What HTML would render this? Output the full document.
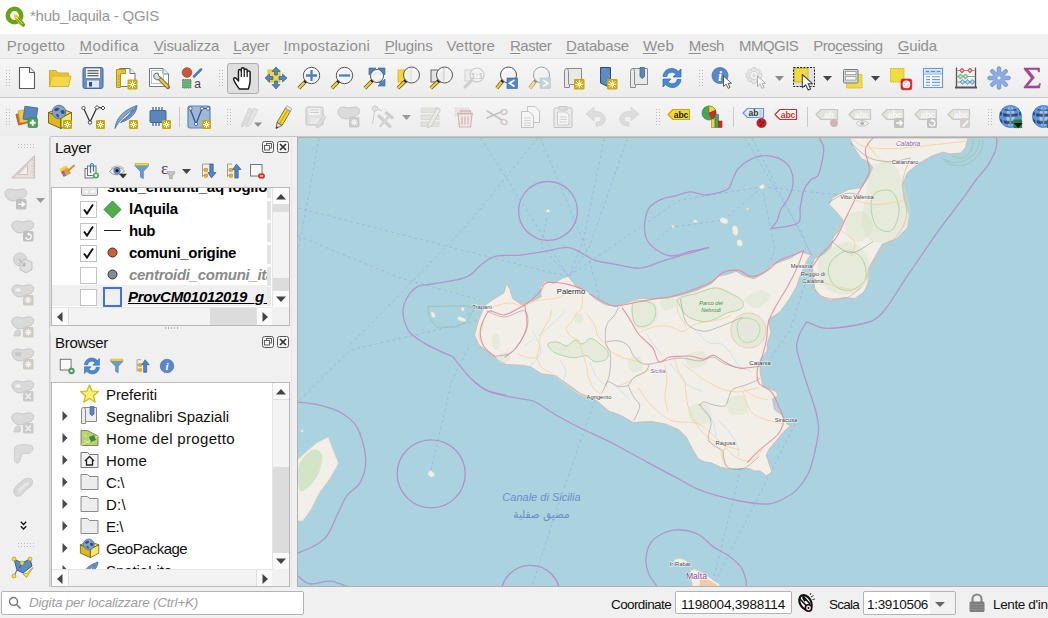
<!DOCTYPE html>
<html lang="it">
<head>
<meta charset="utf-8">
<title>*hub_laquila - QGIS</title>
<style>
html,body{margin:0;padding:0;}
body{width:1048px;height:618px;overflow:hidden;background:#f0f0f0;font-family:"Liberation Sans","DejaVu Sans",sans-serif;font-size:14px;color:#000;position:relative;}
.abs{position:absolute;}
#title{left:0;top:0;width:1048px;height:34px;background:#fff;}
#title .t{position:absolute;left:30px;top:7px;font-size:15px;color:#979797;white-space:nowrap;letter-spacing:0.1px;}
#menubar{left:0;top:34px;width:1048px;height:24px;background:#f0f0f0;border-bottom:1px solid #e2e2e2;}
#menubar span{position:absolute;top:3px;font-size:15px;color:#909090;white-space:nowrap;}
#menubar u{text-decoration-thickness:1px;text-underline-offset:2px;}
#tb1{left:0;top:59px;width:1048px;height:38px;background:linear-gradient(#f6f6f6,#ececec);border-bottom:1px solid #c6c6c6;}
#tb2{left:0;top:98px;width:1048px;height:38px;background:linear-gradient(#fafafa 0,#f5f5f5 2px,#ececec);}
.ic{position:absolute;width:24px;height:24px;overflow:visible;}
.grip{position:absolute;width:6px;height:18px;background-image:radial-gradient(circle,#b8b8b8 0.7px,transparent 0.9px);background-size:3px 3px;}
.vsep{position:absolute;width:1px;background:#c8c8c8;}
#lefttb{left:0;top:137px;width:49px;height:450px;background:#f0f0f0;border-right:1px solid #cfcfcf;}
.panel{position:absolute;background:#f0f0f0;}
.tree{position:absolute;background:#fff;border:1px solid #b9b9b9;overflow:hidden;}
.ptitle{position:absolute;font-size:15px;color:#111;white-space:nowrap;}
.row{position:absolute;left:0;height:22px;white-space:nowrap;}
.lt{position:absolute;font-size:15px;font-weight:bold;white-space:nowrap;color:#000;}
.bt{position:absolute;font-size:15px;white-space:nowrap;color:#111;}
.cb{position:absolute;width:15px;height:15px;border:1px solid #c4c4c4;background:#fff;}
#status{left:0;top:587px;width:1048px;height:31px;background:#f0f0f0;}
.sbx{position:absolute;background:#fff;border:1px solid #b4b4b4;border-radius:2px;box-sizing:border-box;}
</style>
</head>
<body>

<div id="title" class="abs">
<svg class="abs" style="left:5px;top:6px" width="20" height="21" viewBox="0 0 20 21"><circle cx="9.500" cy="9.500" r="6.700" fill="none" stroke="#6aa319" stroke-width="4.600"/><path d="M9 9L12.500 9.500L19 16.500L19 19.500L15.500 19.500L9.500 12.500Z" fill="#ecc72c"/><path d="M12.500 12.500L19.500 20" stroke="#6aa319" stroke-width="3.600"/><path d="M8.500 8L13 9.500L10 12.500Z" fill="#ecc72c"/><path d="M11.500 11.500L17.500 18" stroke="#f4e27a" stroke-width="1"/></svg>
<span class="t" style="letter-spacing:-0.23px">*hub_laquila - QGIS</span>
</div>
<div id="menubar" class="abs">
<span style="left:6.8px;letter-spacing:0.19px">P<u>r</u>ogetto</span>
<span style="left:79.5px;letter-spacing:0.47px"><u>M</u>odifica</span>
<span style="left:153.8px;letter-spacing:-0.18px"><u>V</u>isualizza</span>
<span style="left:233.3px;letter-spacing:-0.27px"><u>L</u>ayer</span>
<span style="left:283.5px;letter-spacing:0.19px"><u>I</u>mpostazioni</span>
<span style="left:384.7px;letter-spacing:-0.20px"><u>P</u>lugins</span>
<span style="left:446.5px;letter-spacing:0.14px">Vett<u>o</u>re</span>
<span style="left:510px;letter-spacing:-0.51px"><u>R</u>aster</span>
<span style="left:566.1px;letter-spacing:-0.18px"><u>D</u>atabase</span>
<span style="left:642.9px;letter-spacing:0.17px"><u>W</u>eb</span>
<span style="left:688.7px;letter-spacing:-0.32px"><u>M</u>esh</span>
<span style="left:739.1px;letter-spacing:-0.57px">MMQGIS</span>
<span style="left:813.3px;letter-spacing:-0.48px">Pro<u>c</u>essing</span>
<span style="left:897.8px;letter-spacing:-0.21px"><u>G</u>uida</span>
</div>
<div id="tb1" class="abs"></div><div id="tb2" class="abs"></div>
<div class="grip" style="left:5px;top:69px"></div>
<svg class="ic" style="left:15px;top:66px;width:24px;height:24px" viewBox="0 0 24 24"><path d="M4.5 1.5H14.5L19.5 6.5V22.5H4.5Z" fill="#fff" stroke="#5a5a5a" stroke-width="1.1" stroke-linejoin="round"/><path d="M14.5 1.5V6.5H19.5" fill="#eee" stroke="#5a5a5a" stroke-width="1.1" stroke-linejoin="round"/></svg>
<svg class="ic" style="left:48px;top:66px;width:24px;height:24px" viewBox="0 0 24 24"><path d="M1.5 4.5H8L10 7H20.5V20.5H1.5Z" fill="#e8c534" stroke="#d2ae1c" stroke-width="1"/><path d="M4 10H23L20.5 20.5H1.5Z" fill="#f3d84a" stroke="#d9b621" stroke-width="1" stroke-linejoin="round"/></svg>
<svg class="ic" style="left:81px;top:66px;width:24px;height:24px" viewBox="0 0 24 24"><rect x="2" y="1.5" width="20" height="21" rx="2" fill="#6790c4" stroke="#44699a" stroke-width="1"/><rect x="5" y="2.500" width="14" height="9.500" fill="#f6f6f6"/><path d="M6.500 4.700H17.500M6.500 7.200H17.500M6.500 9.700H17.500" stroke="#3a3a3a" stroke-width="1.100"/><rect x="6" y="14.500" width="12" height="7" fill="#e3e6ea"/><rect x="8" y="16" width="3" height="4.500" fill="#33507c"/></svg>
<svg class="ic" style="left:114px;top:66px;width:24px;height:24px" viewBox="0 0 24 24"><path d="M5.5 2.5H16L21 7.5V20.5H5.5Z" fill="#fff" stroke="#777" stroke-width="1"/><path d="M16 2.5V7.5H21" fill="#eee" stroke="#777" stroke-width="1"/><path d="M2.5 3.500H11.5V7.5H6.5V21.5H2.5Z" fill="#e9c83a" stroke="#b89512" stroke-width="1"/><path d="M4 10H5.5M4 13H5.5M4 16H5.5M4 19H5.500M8 5V6" stroke="#9a7c10" stroke-width="0.8"/><rect x="13.5" y="13.5" width="10" height="10" rx="1.3" fill="#c9a80a"/><g stroke="#fff" stroke-width="0.95" stroke-linecap="round"><path d="M18.5 15.0V22.0M15.0 18.5H22.0M15.8 15.8L21.2 21.2M21.2 15.8L15.8 21.2"/></g><circle cx="18.5" cy="18.5" r="1.5" fill="#fff"/><circle cx="18.5" cy="18.5" r="0.6" fill="#c9a80a"/></svg>
<svg class="ic" style="left:147px;top:66px;width:24px;height:24px" viewBox="0 0 24 24"><path d="M2.5 2.5H16L21.5 8V20.5H2.5Z" fill="#fff" stroke="#777" stroke-width="1"/><path d="M16 2.5V8H21.5" fill="#eee" stroke="#777" stroke-width="1"/><rect x="4.5" y="4.5" width="12" height="13" fill="none" stroke="#a9c4dc" stroke-width="1"/><path d="M12 12L21 21" stroke="#8a6d1c" stroke-width="4.2" stroke-linecap="round"/><path d="M12.500 12.5L20.5 20.5" stroke="#e7c45a" stroke-width="2.4" stroke-linecap="round"/><path d="M8 7.500A3.600 3.600 0 1 0 13.500 12L11.500 9.500L11 7Z" fill="#ddd" stroke="#666" stroke-width="1"/></svg>
<svg class="ic" style="left:180px;top:66px;width:24px;height:24px" viewBox="0 0 24 24"><circle cx="7" cy="6.500" r="4.800" fill="#c8573a" stroke="#a8452c" stroke-width="0.8"/><path d="M14 10.500L21 3.500" stroke="#4f7fb5" stroke-width="2.600" stroke-linecap="round"/><rect x="2.500" y="13.500" width="8.500" height="8.500" fill="#6fae7a" stroke="#4a8f58" stroke-width="0.9" stroke-dasharray="1.500 0.800"/><text x="17.500" y="22" font-family="Liberation Sans,sans-serif" font-size="12" text-anchor="middle" fill="#444">a</text></svg>
<div class="grip" style="left:218px;top:69px"></div>
<div class="abs" style="left:227px;top:63px;width:30px;height:29px;background:#dfdfdf;border:1px solid #adadad;border-radius:3px"></div>
<svg class="ic" style="left:231px;top:66px;width:24px;height:24px" viewBox="0 0 24 24"><g transform="translate(12 12) scale(1.130) translate(-11.500 -11.800)"><path d="M8.200 21.500C6 18 3.500 15 3.200 12.800C3.100 11.500 4.600 11.200 5.600 12.300L7.500 14.500V5.500C7.500 3.800 10 3.800 10 5.500V4C10 2.300 12.600 2.300 12.600 4V5C12.600 3.500 15.200 3.500 15.200 5V6.500C15.200 5.200 17.800 5.200 17.800 6.800V14C17.800 17 17 19 16.200 21.500Z" fill="#fff" stroke="#1c1c1c" stroke-width="1.300" stroke-linejoin="round"/><path d="M10 5.500V11M12.600 5V11M15.200 6.500V11" stroke="#1c1c1c" stroke-width="1.100"/></g></svg>
<svg class="ic" style="left:264px;top:66px;width:24px;height:24px" viewBox="0 0 24 24"><rect x="4" y="4" width="12" height="12" fill="#f0d83c" stroke="#d0b418" stroke-width="0.8"/><g fill="#4f86c6" stroke="#2f5f98" stroke-width="0.700" stroke-linejoin="round"><path d="M12 1L16 5.500H13.500V9H10.500V5.500H8Z"/><path d="M12 23L16 18.500H13.500V15H10.500V18.500H8Z"/><path d="M1 12L5.500 8V10.500H9V13.500H5.500V16Z"/><path d="M23 12L18.500 8V10.500H15V13.500H18.500V16Z"/></g></svg>
<svg class="ic" style="left:297px;top:66px;width:24px;height:24px" viewBox="0 0 24 24"><g opacity="1"><path d="M8.432 15.568L1.8 22.2" stroke="#5a4a10" stroke-width="3.6" stroke-linecap="butt"/><path d="M7.832000000000001 16.168L1.8 22.2" stroke="#f2cf30" stroke-width="2.3" stroke-linecap="butt"/><circle cx="8.632" cy="15.368" r="1.7" fill="#111"/><circle cx="14.5" cy="9.5" r="8.2" fill="#f3f3f1" fill-opacity="0.9" stroke="#555" stroke-width="1"/><path d="M8.760000000000002 7.040000000000001A6.56 6.56 0 0 1 18.6 4.580000000000001" fill="none" stroke="#fff" stroke-width="1.5" opacity="0.8"/></g><path d="M14.500 4V15M9 9.500H20" stroke="#4a80c0" stroke-width="2.300"/></svg>
<svg class="ic" style="left:330px;top:66px;width:24px;height:24px" viewBox="0 0 24 24"><g opacity="1"><path d="M8.432 15.568L1.8 22.2" stroke="#5a4a10" stroke-width="3.6" stroke-linecap="butt"/><path d="M7.832000000000001 16.168L1.8 22.2" stroke="#f2cf30" stroke-width="2.3" stroke-linecap="butt"/><circle cx="8.632" cy="15.368" r="1.7" fill="#111"/><circle cx="14.5" cy="9.5" r="8.2" fill="#f3f3f1" fill-opacity="0.9" stroke="#555" stroke-width="1"/><path d="M8.760000000000002 7.040000000000001A6.56 6.56 0 0 1 18.6 4.580000000000001" fill="none" stroke="#fff" stroke-width="1.5" opacity="0.8"/></g><path d="M9 9.500H20" stroke="#4a80c0" stroke-width="2.300"/></svg>
<svg class="ic" style="left:363px;top:66px;width:24px;height:24px" viewBox="0 0 24 24"><g fill="#4f86c6" stroke="#2f5f98" stroke-width="0.600" stroke-linejoin="round"><path d="M6 2H13L10.800 4.200L13.500 7L11 9.500L8.200 6.800L6 9Z"/><path d="M22 2H15L17.200 4.200L14.500 7L17 9.500L19.800 6.800L22 9Z"/><path d="M22 18H15L17.200 15.800L14.500 13L17 10.500L19.800 13.200L22 11Z" transform="translate(0 2)"/></g><g opacity="1"><path d="M9.190000000000001 14.809999999999999L1.8 22.2" stroke="#5a4a10" stroke-width="3.6" stroke-linecap="butt"/><path d="M8.590000000000002 15.409999999999998L1.8 22.2" stroke="#f2cf30" stroke-width="2.3" stroke-linecap="butt"/><circle cx="9.39" cy="14.61" r="1.7" fill="#111"/><circle cx="14" cy="10" r="6.5" fill="#f3f3f1" fill-opacity="0.9" stroke="#555" stroke-width="1"/><path d="M9.45 8.05A5.2 5.2 0 0 1 17.25 6.1" fill="none" stroke="#fff" stroke-width="1.5" opacity="0.8"/></g><path d="M16.500 8.500L20 10.500L16.500 12.500Z" fill="#fff" opacity="0.700"/></svg>
<svg class="ic" style="left:396px;top:66px;width:24px;height:24px" viewBox="0 0 24 24"><rect x="2" y="4" width="11" height="12" fill="#f0d83c" stroke="#d0b418" stroke-width="0.800"/><g opacity="1"><path d="M9.58 14.92L1.8 22.2" stroke="#5a4a10" stroke-width="3.6" stroke-linecap="butt"/><path d="M8.98 15.52L1.8 22.2" stroke="#f2cf30" stroke-width="2.3" stroke-linecap="butt"/><circle cx="9.78" cy="14.72" r="1.7" fill="#111"/><circle cx="15.5" cy="9" r="8" fill="#f3f3f1" fill-opacity="0.9" stroke="#555" stroke-width="1"/><path d="M9.9 6.6A6.4 6.4 0 0 1 19.5 4.2" fill="none" stroke="#fff" stroke-width="1.5" opacity="0.8"/></g><path d="M15 2V15" stroke="#ccc" stroke-width="0.800"/></svg>
<svg class="ic" style="left:429px;top:66px;width:24px;height:24px" viewBox="0 0 24 24"><rect x="2" y="4" width="11" height="12" fill="#e4e4e4" stroke="#666" stroke-width="1"/><g opacity="1"><path d="M9.58 14.92L1.8 22.2" stroke="#5a4a10" stroke-width="3.6" stroke-linecap="butt"/><path d="M8.98 15.52L1.8 22.2" stroke="#f2cf30" stroke-width="2.3" stroke-linecap="butt"/><circle cx="9.78" cy="14.72" r="1.7" fill="#111"/><circle cx="15.5" cy="9" r="8" fill="#f3f3f1" fill-opacity="0.9" stroke="#555" stroke-width="1"/><path d="M9.9 6.6A6.4 6.4 0 0 1 19.5 4.2" fill="none" stroke="#fff" stroke-width="1.5" opacity="0.8"/></g><path d="M15 2V15" stroke="#bbb" stroke-width="0.800"/></svg>
<svg class="ic" style="left:462px;top:66px;width:24px;height:24px" viewBox="0 0 24 24"><g opacity="0.450"><rect x="3" y="4" width="10" height="11" fill="#e6e6e6" stroke="#999" stroke-width="0.800"/><path d="M9 15L3 21" stroke="#aaa" stroke-width="3" stroke-linecap="round"/><circle cx="15" cy="9" r="7" fill="#f6f6f6" stroke="#999" stroke-width="1.200"/><text x="15" y="12.500" font-family="Liberation Sans,sans-serif" font-weight="bold" font-size="8.500" text-anchor="middle" fill="#999">1:1</text></g></svg>
<svg class="ic" style="left:495px;top:66px;width:24px;height:24px" viewBox="0 0 24 24"><g opacity="1"><path d="M7.58 14.92L1.8 22.2" stroke="#5a4a10" stroke-width="3.6" stroke-linecap="butt"/><path d="M6.98 15.52L1.8 22.2" stroke="#f2cf30" stroke-width="2.3" stroke-linecap="butt"/><circle cx="7.78" cy="14.72" r="1.7" fill="#111"/><circle cx="13.5" cy="9" r="8" fill="#f3f3f1" fill-opacity="0.9" stroke="#555" stroke-width="1"/><path d="M7.9 6.6A6.4 6.4 0 0 1 17.5 4.2" fill="none" stroke="#fff" stroke-width="1.5" opacity="0.8"/></g><rect x="12" y="12" width="10.500" height="10.500" fill="#4f86c6" stroke="#2f5f98" stroke-width="0.600"/><path d="M19.500 14L14.500 17.200L19.500 20.500" fill="none" stroke="#fff" stroke-width="1.800"/></svg>
<svg class="ic" style="left:528px;top:66px;width:24px;height:24px" viewBox="0 0 24 24"><g opacity="0.520"><g opacity="1"><path d="M7.58 14.92L1.8 22.2" stroke="#5a4a10" stroke-width="3.6" stroke-linecap="butt"/><path d="M6.98 15.52L1.8 22.2" stroke="#f2cf30" stroke-width="2.3" stroke-linecap="butt"/><circle cx="7.78" cy="14.72" r="1.7" fill="#111"/><circle cx="13.5" cy="9" r="8" fill="#f3f3f1" fill-opacity="0.9" stroke="#555" stroke-width="1"/><path d="M7.9 6.6A6.4 6.4 0 0 1 17.5 4.2" fill="none" stroke="#fff" stroke-width="1.5" opacity="0.8"/></g><rect x="12" y="12" width="10.500" height="10.500" fill="#9fb4cc" stroke="#8aa" stroke-width="0.600"/><path d="M15 14L20 17.200L15 20.500" fill="none" stroke="#fff" stroke-width="1.800"/></g></svg>
<svg class="ic" style="left:561px;top:66px;width:24px;height:24px" viewBox="0 0 24 24"><path d="M5.500 2.500H20.500V18.500H8.500V21.500H3.500V5.500Q3.500 2.500 5.500 2.500Z" fill="#e9e9e9" stroke="#8a8a8a" stroke-width="1"/><path d="M5.500 2.500Q7.500 2.500 7.500 5.500V18.500" fill="none" stroke="#8a8a8a" stroke-width="1"/><rect x="13" y="13" width="10.5" height="10.5" rx="1.3" fill="#c9a80a"/><g stroke="#fff" stroke-width="0.95" stroke-linecap="round"><path d="M18.25 14.5V22.0M14.5 18.25H22.0M15.3 15.3L21.2 21.2M21.2 15.3L15.3 21.2"/></g><circle cx="18.25" cy="18.25" r="1.5" fill="#fff"/><circle cx="18.25" cy="18.25" r="0.6" fill="#c9a80a"/></svg>
<svg class="ic" style="left:594px;top:66px;width:24px;height:24px" viewBox="0 0 24 24"><path d="M6.500 1.500H16.500V22L6.500 17Z" fill="#5b86ba" stroke="#2f4f7a" stroke-width="1" stroke-linejoin="round"/><path d="M8 3L15 16M10 2L16 12M7 8L12 18" stroke="#7ea3cf" stroke-width="0.600"/><rect x="13" y="13" width="10.5" height="10.5" rx="1.3" fill="#c9a80a"/><g stroke="#fff" stroke-width="0.95" stroke-linecap="round"><path d="M18.25 14.5V22.0M14.5 18.25H22.0M15.3 15.3L21.2 21.2M21.2 15.3L15.3 21.2"/></g><circle cx="18.25" cy="18.25" r="1.5" fill="#fff"/><circle cx="18.25" cy="18.25" r="0.6" fill="#c9a80a"/></svg>
<svg class="ic" style="left:627px;top:66px;width:24px;height:24px" viewBox="0 0 24 24"><path d="M5.500 2.500H20.500V18.500H8.500V21.500H3.500V5.500Q3.500 2.500 5.500 2.500Z" fill="#e9e9e9" stroke="#8a8a8a" stroke-width="1"/><path d="M5.500 2.500Q7.500 2.500 7.500 5.500V18.500" fill="none" stroke="#8a8a8a" stroke-width="1"/><path d="M13 1.500H17.500V10.500L15.200 12.500L13 10.500Z" fill="#5b86ba" stroke="#3f689a" stroke-width="0.800"/></svg>
<svg class="ic" style="left:660px;top:66px;width:24px;height:24px" viewBox="0 0 24 24"><g fill="#4a8ad0" stroke="#2d66aa" stroke-width="0.700" stroke-linejoin="round"><path d="M3 10.500C3.500 5 8 2 12.500 2.500C15 2.800 17 4 18.300 5.500L21 3V11H13L15.800 8.200C14.500 6.800 13 6.200 11.800 6.200C9 6.200 7.200 8 6.800 10.500Z"/><path d="M21 13.500C20.500 19 16 22 11.500 21.500C9 21.200 7 20 5.700 18.500L3 21V13H11L8.200 15.800C9.500 17.200 11 17.800 12.200 17.800C15 17.800 16.800 16 17.200 13.500Z"/></g></svg>
<div class="grip" style="left:698px;top:69px"></div>
<svg class="ic" style="left:710px;top:66px;width:24px;height:24px" viewBox="0 0 24 24"><circle cx="10" cy="9.500" r="8" fill="#5b86c8" stroke="#4672b0" stroke-width="0.800"/><text x="10" y="14.500" font-family="Liberation Serif,serif" font-style="italic" font-weight="bold" font-size="14" text-anchor="middle" fill="#fff">i</text><path transform="translate(13.5 10) scale(0.95)" d="M0 0L0 11L2.8 8.6L4.9 13L6.9 12L4.9 7.8L8.4 7.6Z" fill="#fff" stroke="#444" stroke-width="0.9" stroke-linejoin="round"/></svg>
<svg class="ic" style="left:744px;top:66px;width:24px;height:24px" viewBox="0 0 24 24"><g opacity="0.450"><path d="M10 1.500L12 2L12.600 4.200L14.800 3.300L16.300 4.800L15.400 7L17.600 7.600L18 9.500L17.600 11.400L15.400 12L16.300 14.200L14.800 15.700L12.600 14.800L12 17L10 17.500L8 17L7.400 14.800L5.200 15.700L3.700 14.200L4.600 12L2.400 11.400L2 9.500L2.400 7.600L4.600 7L3.700 4.800L5.200 3.300L7.400 4.200L8 2Z" fill="#dcdcdc" stroke="#999" stroke-width="0.900"/><circle cx="10" cy="9.500" r="4.200" fill="#f2f2f2" stroke="#999" stroke-width="0.900"/><path d="M8.600 7.200L12.500 9.500L8.600 11.800Z" fill="#bbb"/><path transform="translate(13.5 10) scale(0.95)" d="M0 0L0 11L2.8 8.6L4.9 13L6.9 12L4.9 7.8L8.4 7.6Z" fill="#fff" stroke="#444" stroke-width="0.9" stroke-linejoin="round"/></g></svg>
<svg class="ic" style="left:792px;top:66px;width:24px;height:24px" viewBox="0 0 24 24"><rect x="1.500" y="1.500" width="21" height="19" fill="#dfe3e3" stroke="#222" stroke-width="1" stroke-dasharray="2 1.300"/><rect x="2.500" y="2.500" width="13.500" height="13.500" fill="#f0dc40" stroke="#c9ad14" stroke-width="0.800"/><path transform="translate(10.3 8.5) scale(1.2)" d="M0 0L0 11L2.8 8.6L4.9 13L6.9 12L4.9 7.8L8.4 7.6Z" fill="#fff" stroke="#444" stroke-width="0.9" stroke-linejoin="round"/></svg>
<svg class="ic" style="left:840px;top:66px;width:24px;height:24px" viewBox="0 0 24 24"><rect x="6.500" y="8.500" width="15.500" height="13.500" fill="#f0dc40" stroke="#c9ad14" stroke-width="0.900" stroke-dasharray="1.500 0.800"/><rect x="3.500" y="3.500" width="14.500" height="13.500" rx="1" fill="#d4dcdf" stroke="#7a7a7a" stroke-width="1"/><rect x="5.500" y="5.500" width="10.500" height="3.200" fill="#fff" stroke="#888" stroke-width="0.700"/><rect x="5.500" y="10.800" width="10.500" height="3.200" fill="#fff" stroke="#888" stroke-width="0.700"/></svg>
<svg class="ic" style="left:888px;top:66px;width:24px;height:24px" viewBox="0 0 24 24"><rect x="2.500" y="2.500" width="13.500" height="13.500" fill="#f0dc40" stroke="#c9ad14" stroke-width="0.900" stroke-dasharray="1.500 0.800"/><rect x="13" y="13" width="10.800" height="10.800" rx="2" fill="#dc2a2a" stroke="#b51818" stroke-width="0.600"/><circle cx="18.400" cy="18.400" r="3.200" fill="#f4d0d0" stroke="#fff" stroke-width="1.300"/><path d="M16.200 20.600L20.600 16.200" stroke="#fff" stroke-width="1.400"/></svg>
<svg class="ic" style="left:921px;top:66px;width:24px;height:24px" viewBox="0 0 24 24"><rect x="2.500" y="2.500" width="19" height="19" fill="#fbfdff" stroke="#6a9ad4" stroke-width="1.100"/><rect x="3.500" y="3.500" width="17" height="4" fill="#c4daf0"/><path d="M5 5.500H8M10 5.500H14M16 5.500H19" stroke="#5a8ac8" stroke-width="1.100"/><path d="M3 8H21" stroke="#6a9ad4" stroke-width="0.800"/><path d="M5 10.800H9M11 10.800H19M5 13.600H9M11 13.600H19M5 16.400H9M11 16.400H19M5 19.200H9M11 19.200H19" stroke="#6a9ad4" stroke-width="1.100"/></svg>
<svg class="ic" style="left:954px;top:66px;width:24px;height:24px" viewBox="0 0 24 24"><path d="M2.500 1.500V21M21.500 1.500V21" stroke="#555" stroke-width="1.300"/><path d="M1 21.500H23" stroke="#555" stroke-width="2"/><path d="M2.500 4.500H21.500M2.500 10.500H21.500M2.500 16H21.500" stroke="#888" stroke-width="0.800"/><path d="M5.4 4.5L8 1.9L10.6 4.5L8 7.1Z" fill="#ec6a78" stroke="#c8404e" stroke-width="0.700"/><circle cx="8" cy="4.5" r="0.800" fill="#fff" opacity="0.800"/><path d="M13.4 4.5L16 1.9L18.6 4.5L16 7.1Z" fill="#ec6a78" stroke="#c8404e" stroke-width="0.700"/><circle cx="16" cy="4.5" r="0.800" fill="#fff" opacity="0.800"/><path d="M3.9 10.5L6.5 7.9L9.1 10.5L6.5 13.1Z" fill="#8ad09a" stroke="#4aa55a" stroke-width="0.700"/><circle cx="6.5" cy="10.5" r="0.800" fill="#fff" opacity="0.800"/><path d="M8.9 10.5L11.5 7.9L14.1 10.5L11.5 13.1Z" fill="#8ad09a" stroke="#4aa55a" stroke-width="0.700"/><circle cx="11.5" cy="10.5" r="0.800" fill="#fff" opacity="0.800"/><path d="M5.9 16L8.5 13.4L11.1 16L8.5 18.6Z" fill="#86bce0" stroke="#4f86c6" stroke-width="0.700"/><circle cx="8.5" cy="16" r="0.800" fill="#fff" opacity="0.800"/><path d="M10.9 16L13.5 13.4L16.1 16L13.5 18.6Z" fill="#86bce0" stroke="#4f86c6" stroke-width="0.700"/><circle cx="13.5" cy="16" r="0.800" fill="#fff" opacity="0.800"/><path d="M15.6 16L18.2 13.4L20.8 16L18.2 18.6Z" fill="#86bce0" stroke="#4f86c6" stroke-width="0.700"/><circle cx="18.2" cy="16" r="0.800" fill="#fff" opacity="0.800"/></svg>
<svg class="ic" style="left:987px;top:66px;width:24px;height:24px" viewBox="0 0 24 24"><g transform="translate(12 12)" fill="#8cabe2" stroke="#5a84cc" stroke-width="0.700"><g id="tth"><rect x="-1.800" y="-11.300" width="3.600" height="8" rx="1.700"/></g><rect x="-1.800" y="-11.300" width="3.600" height="8" rx="1.700" transform="rotate(45)"/><rect x="-1.800" y="-11.300" width="3.600" height="8" rx="1.700" transform="rotate(90)"/><rect x="-1.800" y="-11.300" width="3.600" height="8" rx="1.700" transform="rotate(135)"/><rect x="-1.800" y="-11.300" width="3.600" height="8" rx="1.700" transform="rotate(180)"/><rect x="-1.800" y="-11.300" width="3.600" height="8" rx="1.700" transform="rotate(225)"/><rect x="-1.800" y="-11.300" width="3.600" height="8" rx="1.700" transform="rotate(270)"/><rect x="-1.800" y="-11.300" width="3.600" height="8" rx="1.700" transform="rotate(315)"/><circle r="6.300" stroke="none"/><circle r="2" fill="#f4f4f4" stroke="#5a84cc" stroke-width="0.500"/></g></svg>
<svg class="ic" style="left:1020px;top:66px;width:24px;height:24px" viewBox="0 0 24 24"><path d="M4 2H19.500V6H18.500C18.200 4.300 17.600 3.600 16 3.600H8L14.500 11.500L7.500 20H16.500C18.300 20 18.900 19.200 19.500 17.500H20.500L19.500 22H4V21L11.200 12L4 3Z" fill="#a8489e" stroke="#8a3484" stroke-width="0.500"/></svg>
<svg class="abs" style="left:774.5px;top:75.5px" width="9" height="5" viewBox="0 0 9 5"><path d="M0 0H9L4.5 5Z" fill="#8a8a8a"/></svg>
<svg class="abs" style="left:823px;top:75.5px" width="9" height="5" viewBox="0 0 9 5"><path d="M0 0H9L4.5 5Z" fill="#444"/></svg>
<svg class="abs" style="left:871px;top:75.5px" width="9" height="5" viewBox="0 0 9 5"><path d="M0 0H9L4.5 5Z" fill="#444"/></svg>
<div class="grip" style="left:5px;top:108px"></div>
<svg class="ic" style="left:15px;top:105px;width:24px;height:24px" viewBox="0 0 24 24"><rect x="2" y="8" width="11" height="11" transform="rotate(-15 7 13)" fill="#d4623f" stroke="#b04a2c" stroke-width="0.700"/><rect x="4" y="5" width="12" height="12" transform="rotate(-8 10 11)" fill="#eccb45" stroke="#c7a521" stroke-width="0.700"/><rect x="9" y="2" width="13" height="13" transform="rotate(8 15 8)" fill="#5b86ba" stroke="#3f689a" stroke-width="0.800"/><rect x="13" y="13" width="9.500" height="9.500" rx="1.300" fill="#4aa55a" stroke="#2f7a3e" stroke-width="0.600"/><path d="M17.750 14.800V20.700M14.800 17.750H20.700" stroke="#fff" stroke-width="2"/></svg>
<svg class="ic" style="left:48px;top:105px;width:24px;height:24px" viewBox="0 0 24 24"><path d="M0.500 7.500L11 3L23.500 7.500L13 13Z" fill="#f3dc5a" stroke="#5a4a08" stroke-width="0.800" stroke-linejoin="round"/><path d="M0.500 7.500V18L13 23.500V13Z" fill="#dfb81c" stroke="#5a4a08" stroke-width="0.800" stroke-linejoin="round"/><path d="M23.500 7.500V18L13 23.500V13Z" fill="#f5e870" stroke="#5a4a08" stroke-width="0.800" stroke-linejoin="round"/><circle cx="11" cy="7" r="6.800" fill="#7f9fd0" stroke="#4a6a9a" stroke-width="0.800"/><path d="M6 5C7.500 2.500 10 2 11.500 3.500C10.500 6 8 7.500 6 5ZM12.500 5.500C15 4 17.500 5.500 16.500 8.500C14.500 10 12.500 8.500 12.500 5.500ZM8 9C10 8.500 11.500 10 11 12.500C9.500 12.500 8 11 8 9Z" fill="#34507a"/><rect x="15" y="15" width="9" height="9" rx="1.3" fill="#c9a80a"/><g stroke="#fff" stroke-width="0.95" stroke-linecap="round"><path d="M19.5 16.5V22.5M16.5 19.5H22.5M17.3 17.3L21.7 21.7M21.7 17.3L17.3 21.7"/></g><circle cx="19.5" cy="19.5" r="1.5" fill="#fff"/><circle cx="19.5" cy="19.5" r="0.6" fill="#c9a80a"/></svg>
<svg class="ic" style="left:81px;top:105px;width:24px;height:24px" viewBox="0 0 24 24"><path d="M2.500 3L9 17L16 2.500L22 3" fill="none" stroke="#333" stroke-width="1.200"/><g fill="#fff" stroke="#333" stroke-width="0.900"><path d="M2.500 1L4.500 3L2.500 5L0.500 3Z"/><circle cx="9" cy="17.500" r="1.700"/><path d="M16 0.500L18 2.500L16 4.500L14 2.500Z"/><path d="M22 1L24 3L22 5L20 3Z"/></g><rect x="15" y="15" width="9" height="9" rx="1.3" fill="#c9a80a"/><g stroke="#fff" stroke-width="0.95" stroke-linecap="round"><path d="M19.5 16.5V22.5M16.5 19.5H22.5M17.3 17.3L21.7 21.7M21.7 17.3L17.3 21.7"/></g><circle cx="19.5" cy="19.5" r="1.5" fill="#fff"/><circle cx="19.5" cy="19.5" r="0.6" fill="#c9a80a"/></svg>
<svg class="ic" style="left:114px;top:105px;width:24px;height:24px" viewBox="0 0 24 24"><path d="M1 23.500C2 15 7 6 23 0.500C22.500 8 17 14.500 6.500 17.500C11 14 15.500 9.500 19 4.500C12 9 5 15.500 1 23.500Z" fill="#86a8d4" stroke="#4a70a4" stroke-width="0.900" stroke-linejoin="round"/><path d="M22.500 1C20 7 15 12 8 16" fill="none" stroke="#5a80b4" stroke-width="1.500"/><rect x="15" y="15" width="9" height="9" rx="1.3" fill="#c9a80a"/><g stroke="#fff" stroke-width="0.95" stroke-linecap="round"><path d="M19.5 16.5V22.5M16.5 19.5H22.5M17.3 17.3L21.7 21.7M21.7 17.3L17.3 21.7"/></g><circle cx="19.5" cy="19.5" r="1.5" fill="#fff"/><circle cx="19.5" cy="19.5" r="0.6" fill="#c9a80a"/></svg>
<svg class="ic" style="left:147px;top:105px;width:24px;height:24px" viewBox="0 0 24 24"><rect x="3" y="5.500" width="16" height="12" rx="1" fill="#5b86ba" stroke="#3f689a" stroke-width="1"/><path d="M6 5.500V2M9 5.500V2M12 5.500V2M15 5.500V2M6 17.500V21M9 17.500V21M12 17.500V21" stroke="#3f689a" stroke-width="1.300"/><rect x="15" y="15" width="9" height="9" rx="1.3" fill="#c9a80a"/><g stroke="#fff" stroke-width="0.95" stroke-linecap="round"><path d="M19.5 16.5V22.5M16.5 19.5H22.5M17.3 17.3L21.7 21.7M21.7 17.3L17.3 21.7"/></g><circle cx="19.5" cy="19.5" r="1.5" fill="#fff"/><circle cx="19.5" cy="19.5" r="0.6" fill="#c9a80a"/></svg>
<div class="vsep" style="left:179px;top:107px;height:20px"></div>
<svg class="ic" style="left:187px;top:105px;width:24px;height:24px" viewBox="0 0 24 24"><rect x="1" y="1" width="22" height="22" rx="2" fill="#9db8da" stroke="#5b86ba" stroke-width="1.200"/><path d="M3 3.500L9 19L15 3.500L21 3.500" fill="none" stroke="#33527d" stroke-width="1.200"/><g fill="#fff" stroke="#33527d" stroke-width="0.800"><circle cx="3.500" cy="3.500" r="1.600"/><circle cx="9" cy="19" r="1.600"/><circle cx="15" cy="3.500" r="1.600"/><circle cx="21" cy="3.500" r="1.600"/></g><rect x="15" y="15" width="9" height="9" rx="1.3" fill="#c9a80a"/><g stroke="#fff" stroke-width="0.95" stroke-linecap="round"><path d="M19.5 16.5V22.5M16.5 19.5H22.5M17.3 17.3L21.7 21.7M21.7 17.3L17.3 21.7"/></g><circle cx="19.5" cy="19.5" r="1.5" fill="#fff"/><circle cx="19.5" cy="19.5" r="0.6" fill="#c9a80a"/></svg>
<div class="grip" style="left:226px;top:108px"></div>
<svg class="ic" style="left:239px;top:105px;width:24px;height:24px" viewBox="0 0 24 24"><g opacity="0.450"><path d="M3 19L10 3L14 5L6 20L2.500 22Z" fill="#c8c8c8" stroke="#aaa" stroke-width="0.800"/><path d="M8 19L15 3L19 5L11 20L7.500 22Z" fill="#d4d4d4" stroke="#aaa" stroke-width="0.800"/></g><path d="M15 17.500H23L19 22Z" fill="#8e8e8e"/></svg>
<svg class="ic" style="left:272px;top:105px;width:24px;height:24px" viewBox="0 0 24 24"><path d="M5 17.500L13.500 3L18.500 6L10 20.500Z" fill="#f2dc3c" stroke="#7a6408" stroke-width="0.900" stroke-linejoin="round"/><path d="M7.500 19L16 4.500" stroke="#e0a81c" stroke-width="1.600"/><path d="M13.500 3L14.800 0.800L19.800 3.800L18.500 6Z" fill="#f4f0ea" stroke="#999" stroke-width="0.800" stroke-linejoin="round"/><path d="M12.800 4.200L17.800 7.200" stroke="#b8b8b8" stroke-width="1.200"/><path d="M5 17.500L10 20.500L4 23.500Z" fill="#ecdcc0" stroke="#555" stroke-width="0.800" stroke-linejoin="round"/><path d="M4.600 21.300L6.400 22.400L4 23.500Z" fill="#222"/></svg>
<svg class="ic" style="left:304px;top:105px;width:24px;height:24px" viewBox="0 0 24 24"><g opacity="0.520"><rect x="2" y="2" width="17" height="18" rx="1.500" fill="#d4d4d4" stroke="#999" stroke-width="1"/><rect x="5" y="3" width="11" height="7" fill="#f4f4f4"/><path d="M6 5H15M6 7.500H15" stroke="#aaa" stroke-width="1"/><rect x="6" y="13" width="9" height="6" fill="#e6e6e6"/><path d="M13 20L19 10L22 12L16 21.500L12.500 23Z" fill="#d8c8c0" stroke="#aaa" stroke-width="0.800"/></g></svg>
<svg class="ic" style="left:337px;top:105px;width:24px;height:24px" viewBox="0 0 24 24"><g opacity="0.85"><path d="M1 7C0.5 3 5 1 9 2.5C13 4 15 1.5 19 2C23.5 2.5 23.5 8 20.5 10C17.5 12 15 11 12.5 13C10 15 2 14 1 7Z" fill="#d6d8d6" stroke="#bcbcbc" stroke-width="0.9"/><rect x="12" y="12" width="10.500" height="10.500" rx="1.500" fill="#c4c4c4"/><g stroke="#f3f3f3" stroke-width="1.200" stroke-linecap="round"><path d="M17.250 14.200V20.300M14.200 17.250H20.300M15.100 15.100L19.400 19.400M19.400 15.100L15.100 19.400"/></g></g></svg>
<svg class="ic" style="left:370px;top:105px;width:24px;height:24px" viewBox="0 0 24 24"><g opacity="0.550"><path d="M5 3L2.500 19M5 3L12 6" stroke="#aaa" stroke-width="1"/><path d="M6 4.500H17" stroke="#bbb" stroke-width="0.800" stroke-dasharray="1 1"/><circle cx="5" cy="3.500" r="2.600" fill="#eee" stroke="#999" stroke-width="0.900"/><path d="M3.500 2L6.500 5M6.500 2L3.500 5" stroke="#aaa" stroke-width="0.700"/><path d="M9 11L20 21.500" stroke="#b4b4b4" stroke-width="3.200" stroke-linecap="round"/><path d="M20 10L10.500 21" stroke="#c4c0b8" stroke-width="2.600" stroke-linecap="round"/><path d="M16.500 8L22 12.500" stroke="#b0b0b0" stroke-width="3.400" stroke-linecap="round"/></g></svg>
<svg class="ic" style="left:419px;top:105px;width:24px;height:24px" viewBox="0 0 24 24"><g opacity="0.550"><rect x="2" y="3" width="18" height="4.500" fill="#d8d8cc" stroke="#bbb" stroke-width="0.700"/><rect x="2" y="10" width="18" height="4.500" fill="#d8d8cc" stroke="#bbb" stroke-width="0.700"/><rect x="2" y="17" width="18" height="4.500" fill="#d8d8cc" stroke="#bbb" stroke-width="0.700"/><path d="M9 19L18 3L21.500 5L12.500 21L8.500 23Z" fill="#e4e4e4" stroke="#aaa" stroke-width="0.900"/></g></svg>
<svg class="ic" style="left:452px;top:105px;width:24px;height:24px" viewBox="0 0 24 24"><g opacity="0.550"><rect x="3" y="3" width="14" height="8" fill="#ddd" stroke="#bbb" stroke-width="0.700" stroke-dasharray="1.500 1"/><path d="M5 8.500H21M7.500 6H18.500V8.500" fill="none" stroke="#c08080" stroke-width="1.300"/><path d="M6 9L7.500 22H18.500L20 9Z" fill="#f2e4e4" stroke="#c08080" stroke-width="1.200"/><path d="M10 11.500V19.500M13 11.500V19.500M16 11.500V19.500" stroke="#c08080" stroke-width="1.300"/></g></svg>
<svg class="ic" style="left:485px;top:105px;width:24px;height:24px" viewBox="0 0 24 24"><g opacity="0.520"><path d="M2 6L17 15M2 13L17 6.500" stroke="#999" stroke-width="1.600" stroke-linecap="round"/><ellipse cx="19" cy="7" rx="3" ry="2.300" fill="none" stroke="#b99" stroke-width="1.400" transform="rotate(-25 19 7)"/><ellipse cx="19" cy="17" rx="3" ry="2.300" fill="none" stroke="#b99" stroke-width="1.400" transform="rotate(30 19 17)"/></g></svg>
<svg class="ic" style="left:518px;top:105px;width:24px;height:24px" viewBox="0 0 24 24"><g opacity="0.520"><path d="M9.500 1.500H17L21.500 6V17.500H9.500Z" fill="#fafafa" stroke="#999" stroke-width="1"/><path d="M3.500 6.500H11L15.500 11V22.500H3.500Z" fill="#fafafa" stroke="#999" stroke-width="1"/><path d="M6 13H13M6 15.500H13M6 18H13M6 20.500H13" stroke="#aaa" stroke-width="0.800"/></g></svg>
<svg class="ic" style="left:551px;top:105px;width:24px;height:24px" viewBox="0 0 24 24"><g opacity="0.520"><rect x="3" y="3" width="18" height="19.500" rx="1" fill="#e8e4dc" stroke="#999" stroke-width="1"/><rect x="8" y="1.500" width="8" height="3.500" fill="#ccc" stroke="#999" stroke-width="0.800"/><path d="M6.500 7H15L18 10V20H6.500Z" fill="#fafafa" stroke="#999" stroke-width="0.800"/><path d="M8.500 12H16M8.500 14.500H16M8.500 17H16" stroke="#aaa" stroke-width="0.800"/></g></svg>
<svg class="ic" style="left:584px;top:105px;width:24px;height:24px" viewBox="0 0 24 24"><g opacity="0.380"><path d="M2 9L10 2V6.500C19 6 22 11 21 15.500C20 19.500 16 21.500 12 21V17C15 17.500 17 16 17 14C17 12 15 11 10 11.500V16Z" fill="#bdbdbd" stroke="#a5a5a5" stroke-width="0.700" stroke-linejoin="round"/></g></svg>
<svg class="ic" style="left:617px;top:105px;width:24px;height:24px" viewBox="0 0 24 24"><g opacity="0.380" transform="translate(24 0) scale(-1 1)"><path d="M2 9L10 2V6.500C19 6 22 11 21 15.500C20 19.500 16 21.500 12 21V17C15 17.500 17 16 17 14C17 12 15 11 10 11.500V16Z" fill="#bdbdbd" stroke="#a5a5a5" stroke-width="0.700" stroke-linejoin="round"/></g></svg>
<svg class="abs" style="left:401.5px;top:114.5px" width="9" height="5" viewBox="0 0 9 5"><path d="M0 0H9L4.5 5Z" fill="#9a9a9a"/></svg>
<div class="grip" style="left:655px;top:108px"></div>
<svg class="ic" style="left:667px;top:105px;width:24px;height:24px" viewBox="0 0 24 24"><g opacity="1"><path d="M1 9.5L6 4.5H22.5V14.5H6Z" fill="#f0d83c" stroke="#c9a80a" stroke-width="1.2" stroke-linejoin="round"/><text x="14" y="12.6" font-family="Liberation Sans,sans-serif" font-weight="bold" font-size="8.5" text-anchor="middle" fill="#222">abc</text></g></svg>
<svg class="ic" style="left:700px;top:105px;width:24px;height:24px" viewBox="0 0 24 24"><circle cx="9" cy="8" r="7" fill="#4aa55a" stroke="#2f6a3a" stroke-width="0.600"/><path d="M9 8L9 1A7 7 0 0 1 15.500 5.500Z" fill="#f0d83c" stroke="#8a7208" stroke-width="0.500"/><path d="M9 8L15.500 5.500A7 7 0 0 1 12 14.300Z" fill="#d62a2a" stroke="#8a1a1a" stroke-width="0.500"/><rect x="11.500" y="14" width="3.500" height="8.500" fill="#f0d83c" stroke="#8a7208" stroke-width="0.500"/><rect x="15" y="9.500" width="3.500" height="13" fill="#4aa55a" stroke="#2f6a3a" stroke-width="0.500"/><rect x="18.500" y="16" width="3.500" height="6.500" fill="#d62a2a" stroke="#8a1a1a" stroke-width="0.500"/></svg>
<svg class="ic" style="left:742px;top:105px;width:24px;height:24px" viewBox="0 0 24 24"><path d="M1 8L5.500 3.500H21.500V12.500H5.500Z" fill="#dfeaf7" stroke="#5b9bdc" stroke-width="1.200" stroke-linejoin="round"/><text x="11.500" y="11" font-family="Liberation Sans,sans-serif" font-weight="bold" font-size="8.500" text-anchor="middle" fill="#333">ab</text><path d="M18.500 6V14" stroke="#ccc" stroke-width="2.500" stroke-linecap="round"/><circle cx="19.500" cy="18" r="4.600" fill="#c81e2e" stroke="#7a0e18" stroke-width="0.600"/><circle cx="18" cy="16.500" r="0.800" fill="#222"/><circle cx="21" cy="17.500" r="0.800" fill="#222"/><circle cx="19" cy="20" r="0.800" fill="#222"/></svg>
<svg class="ic" style="left:774px;top:105px;width:24px;height:24px" viewBox="0 0 24 24"><g opacity="1"><path d="M1 9.5L6 4.5H22.5V14.5H6Z" fill="#fff" stroke="#d62a2a" stroke-width="1.2" stroke-linejoin="round"/><text x="14" y="12.6" font-family="Liberation Sans,sans-serif" font-weight="bold" font-size="8.5" text-anchor="middle" fill="#d62a2a">abc</text></g></svg>
<svg class="ic" style="left:815px;top:105px;width:24px;height:24px" viewBox="0 0 24 24"><g opacity="0.650"><g opacity="1"><path d="M1 9.5L6 4.5H22.5V14.5H6Z" fill="#dcdcd2" stroke="#b4b4aa" stroke-width="1.2" stroke-linejoin="round"/><text x="14" y="12.6" font-family="Liberation Sans,sans-serif" font-weight="bold" font-size="8.5" text-anchor="middle" fill="#fff">ab</text></g><circle cx="19" cy="18" r="4" fill="#b99"/></g></svg>
<svg class="ic" style="left:848px;top:105px;width:24px;height:24px" viewBox="0 0 24 24"><g opacity="0.650"><g opacity="1"><path d="M1 9.5L6 4.5H22.5V14.5H6Z" fill="#dcdcd2" stroke="#b4b4aa" stroke-width="1.2" stroke-linejoin="round"/><text x="14" y="12.6" font-family="Liberation Sans,sans-serif" font-weight="bold" font-size="8.5" text-anchor="middle" fill="#fff">abc</text></g><path d="M8 18.500C11 14.500 17 14.500 20.500 18.500C17 22 11 22 8 18.500Z" fill="#f4f4f4" stroke="#999" stroke-width="0.800"/><circle cx="14.200" cy="18.300" r="1.900" fill="#999"/></g></svg>
<svg class="ic" style="left:881px;top:105px;width:24px;height:24px" viewBox="0 0 24 24"><g opacity="0.650"><g opacity="1"><path d="M1 9.5L6 4.5H22.5V14.5H6Z" fill="#dcdcd2" stroke="#b4b4aa" stroke-width="1.2" stroke-linejoin="round"/><text x="14" y="12.6" font-family="Liberation Sans,sans-serif" font-weight="bold" font-size="8.5" text-anchor="middle" fill="#fff">abc</text></g><rect x="13" y="13" width="10" height="10" rx="1.500" fill="#aaa"/><path d="M15 18H19V15.500L22 18L19 20.500V18Z" fill="#fff" stroke="#fff" stroke-width="1"/></g></svg>
<svg class="ic" style="left:914px;top:105px;width:24px;height:24px" viewBox="0 0 24 24"><g opacity="0.650"><g opacity="1"><path d="M1 9.5L6 4.5H22.5V14.5H6Z" fill="#dcdcd2" stroke="#b4b4aa" stroke-width="1.2" stroke-linejoin="round"/><text x="14" y="12.6" font-family="Liberation Sans,sans-serif" font-weight="bold" font-size="8.5" text-anchor="middle" fill="#fff">abc</text></g><rect x="13" y="13" width="10" height="10" rx="1.500" fill="#aaa"/><path d="M15.500 18.500A2.700 2.700 0 1 0 18 15.500" fill="none" stroke="#fff" stroke-width="1.300"/><path d="M18.500 13.800L16.300 15.600L18.500 17.400Z" fill="#fff"/></g></svg>
<svg class="ic" style="left:947px;top:105px;width:24px;height:24px" viewBox="0 0 24 24"><g opacity="0.650"><g opacity="1"><path d="M1 9.5L6 4.5H22.5V14.5H6Z" fill="#dcdcd2" stroke="#b4b4aa" stroke-width="1.2" stroke-linejoin="round"/><text x="14" y="12.6" font-family="Liberation Sans,sans-serif" font-weight="bold" font-size="8.5" text-anchor="middle" fill="#fff">abc</text></g><rect x="13" y="13" width="10" height="10" rx="1.500" fill="#c4c0b8"/><path d="M15 21L20.500 15L21.800 16.200L16.300 22Z" fill="#fff"/></g></svg>
<div class="vsep" style="left:733px;top:107px;height:20px"></div>
<div class="vsep" style="left:807px;top:107px;height:20px"></div>
<div class="grip" style="left:987px;top:108px"></div>
<svg class="ic" style="left:999px;top:105px;width:24px;height:24px" viewBox="0 0 24 24"><circle cx="11.500" cy="11.500" r="11" fill="#5a96e4" stroke="#3a70c0" stroke-width="0.800"/><path d="M11.500 0.500C6 4 6 19 11.500 22.500C17 19 17 4 11.500 0.500Z" fill="#e8eef6" opacity="0.550"/><path d="M1.500 7C6 9.500 17 9.500 21.500 7L22.300 10C17 12.500 6 12.500 0.700 10Z" fill="#222" opacity="0.700"/><path d="M0.700 14C6 16.500 17 16.500 22.300 14L21 17.500C16 19.500 7 19.500 2 17.500Z" fill="#222" opacity="0.650"/><path d="M3.500 3.500C7 6 16 6 19.500 3.500" fill="none" stroke="#222" stroke-width="1.400" opacity="0.600"/><path d="M11.500 0.500V22.500" stroke="#5a96e4" stroke-width="1.800"/><path d="M6 2C2.500 7 2.500 16 6 21M17 2C20.500 7 20.500 16 17 21" fill="none" stroke="#5a96e4" stroke-width="1.400"/><rect x="14.500" y="14.500" width="8.500" height="8.500" fill="#2f7a3e" stroke="#4aa55a" stroke-width="0.600" stroke-dasharray="1 1"/><path d="M15 18H23.500L19.200 23Z" fill="#111"/></svg>
<svg class="ic" style="left:1032px;top:105px;width:24px;height:24px" viewBox="0 0 24 24"><circle cx="11.500" cy="11.500" r="11" fill="#5a96e4" stroke="#3a70c0" stroke-width="0.800"/><path d="M11.500 0.500C6 4 6 19 11.500 22.500C17 19 17 4 11.500 0.500Z" fill="#e8eef6" opacity="0.550"/><path d="M1.500 7C6 9.500 17 9.500 21.500 7L22.300 10C17 12.500 6 12.500 0.700 10Z" fill="#222" opacity="0.700"/><path d="M0.700 14C6 16.500 17 16.500 22.300 14L21 17.500C16 19.500 7 19.500 2 17.500Z" fill="#222" opacity="0.650"/><path d="M3.500 3.500C7 6 16 6 19.500 3.500" fill="none" stroke="#222" stroke-width="1.400" opacity="0.600"/><path d="M11.500 0.500V22.500" stroke="#5a96e4" stroke-width="1.800"/><path d="M6 2C2.500 7 2.500 16 6 21M17 2C20.500 7 20.500 16 17 21" fill="none" stroke="#5a96e4" stroke-width="1.400"/><rect x="15" y="14.500" width="8.500" height="8.500" fill="#2f7a3e"/></svg>
<div id="lefttb" class="abs"></div>
<div class="abs" style="left:17px;top:143px;width:17px;height:6px;background-image:radial-gradient(circle,#b8b8b8 0.7px,transparent 0.9px);background-size:3px 3px"></div>
<svg class="ic" style="left:11px;top:155px;width:24px;height:24px" viewBox="0 0 24 24"><g opacity="0.8"><path d="M1 23H23.5V1Z" fill="#e4dcd8" stroke="#c4b4b0" stroke-width="1.100" stroke-linejoin="round"/><path d="M7 19.500H16.500V10Z" fill="#f0f0f0" stroke="#c4b4b0" stroke-width="1" stroke-linejoin="round"/><path d="M20.500 5H23M21.500 8H23M20.500 11H23M21.500 14H23M20.500 17H23M21.500 20H23" stroke="#c4b4b0" stroke-width="0.800"/></g></svg>
<svg class="ic" style="left:4px;top:187px;width:24px;height:24px" viewBox="0 0 24 24"><g opacity="0.85"><path d="M1 7C0.5 3 5 1 9 2.5C13 4 15 1.5 19 2C23.5 2.5 23.5 8 20.5 10C17.5 12 15 11 12.5 13C10 15 2 14 1 7Z" fill="#d6d8d6" stroke="#bcbcbc" stroke-width="0.9"/><rect x="12" y="12" width="10.500" height="10.500" rx="1.500" fill="#b8b8b8"/><path d="M14 17.250H18V14.700L21.300 17.250L18 19.800V17.250Z" fill="#fff" stroke="#fff" stroke-width="0.800" stroke-linejoin="round"/></g></svg>
<svg class="ic" style="left:11px;top:219px;width:24px;height:24px" viewBox="0 0 24 24"><g opacity="0.85"><path d="M1 7C0.5 3 5 1 9 2.5C13 4 15 1.5 19 2C23.5 2.5 23.5 8 20.5 10C17.5 12 15 11 12.5 13C10 15 2 14 1 7Z" fill="#d6d8d6" stroke="#bcbcbc" stroke-width="0.9"/><rect x="12" y="12" width="10.500" height="10.500" rx="1.500" fill="#b8b8b8"/><path d="M14.800 18A2.700 2.700 0 1 0 17.500 15" fill="none" stroke="#fff" stroke-width="1.300"/><path d="M18 13.200L15.800 15L18 16.800Z" fill="#fff"/></g></svg>
<svg class="ic" style="left:11px;top:251px;width:24px;height:24px" viewBox="0 0 24 24"><g opacity="0.85"><circle cx="9" cy="8.500" r="6.500" fill="#d6d6d6" stroke="#bdbdbd" stroke-width="0.800"/><path d="M9 11L15 8L21 11.500V18.500L15 22L9 18.500Z" fill="#dedede" stroke="#b5b5b5" stroke-width="0.900"/><path d="M8 8L14 15M14 15L13.500 11.500M14 15L10.500 14.500" stroke="#aaa" stroke-width="1.100" fill="none"/></g></svg>
<svg class="ic" style="left:11px;top:283px;width:24px;height:24px" viewBox="0 0 24 24"><g opacity="0.85"><path d="M1 7C0.5 3 5 1 9 2.5C13 4 15 1.5 19 2C23.5 2.5 23.5 8 20.5 10C17.5 12 15 11 12.5 13C10 15 2 14 1 7Z" fill="#d6d8d6" stroke="#bcbcbc" stroke-width="0.9"/><ellipse cx="7" cy="7" rx="3.600" ry="2.500" fill="#f0f0f0" stroke="#bbb" stroke-width="0.600"/><rect x="12" y="12" width="10.500" height="10.500" rx="1.500" fill="#c8c4b8"/><g stroke="#f3f3f3" stroke-width="1.2" stroke-linecap="round"><path d="M17 14V20M14 17H20M14.9 14.9L19.1 19.1M19.1 14.9L14.9 19.1"/></g></g></svg>
<svg class="ic" style="left:11px;top:315px;width:24px;height:24px" viewBox="0 0 24 24"><g opacity="0.85"><path d="M1 7C0.5 3 5 1 9 2.5C13 4 15 1.5 19 2C23.5 2.5 23.5 8 20.5 10C17.5 12 15 11 12.5 13C10 15 2 14 1 7Z" fill="#d6d8d6" stroke="#bcbcbc" stroke-width="0.9"/><path d="M3 21C3 17 6 14.500 8 15C10 15.500 10 19 8.500 21Z" fill="#cfcfcf" stroke="#bbb" stroke-width="0.700"/><rect x="12" y="12" width="10.500" height="10.500" rx="1.500" fill="#c8c4b8"/><g stroke="#f3f3f3" stroke-width="1.200" stroke-linecap="round"><path d="M17.250 14.200V20.300M14.200 17.250H20.300M15.100 15.100L19.400 19.400M19.400 15.100L15.100 19.400"/></g></g></svg>
<svg class="ic" style="left:11px;top:347px;width:24px;height:24px" viewBox="0 0 24 24"><g opacity="0.85"><path d="M1 7C0.5 3 5 1 9 2.5C13 4 15 1.5 19 2C23.5 2.5 23.5 8 20.5 10C17.5 12 15 11 12.5 13C10 15 2 14 1 7Z" fill="#d6d8d6" stroke="#bcbcbc" stroke-width="0.9"/><ellipse cx="7" cy="7" rx="3.600" ry="2.500" fill="#c4c4c4"/><rect x="12" y="12" width="10.500" height="10.500" rx="1.500" fill="#c8c4b8"/><g stroke="#f3f3f3" stroke-width="1.200" stroke-linecap="round"><path d="M17.250 14.200V20.300M14.200 17.250H20.300M15.100 15.100L19.400 19.400M19.400 15.100L15.100 19.400"/></g></g></svg>
<svg class="ic" style="left:11px;top:379px;width:24px;height:24px" viewBox="0 0 24 24"><g opacity="0.85"><path d="M1 7C0.5 3 5 1 9 2.5C13 4 15 1.5 19 2C23.5 2.5 23.5 8 20.5 10C17.5 12 15 11 12.5 13C10 15 2 14 1 7Z" fill="#d6d8d6" stroke="#bcbcbc" stroke-width="0.9"/><ellipse cx="7" cy="7" rx="3.600" ry="2.500" fill="#f0f0f0" stroke="#bbb" stroke-width="0.600"/><rect x="12" y="12" width="10.500" height="10.500" rx="1.500" fill="#c4c4c4"/><path d="M15 15L19.500 19.500M19.500 15L15 19.500" stroke="#f3f3f3" stroke-width="1.500" stroke-linecap="round"/></g></svg>
<svg class="ic" style="left:11px;top:411px;width:24px;height:24px" viewBox="0 0 24 24"><g opacity="0.85"><path d="M1 7C0.5 3 5 1 9 2.5C13 4 15 1.5 19 2C23.5 2.5 23.5 8 20.5 10C17.5 12 15 11 12.5 13C10 15 2 14 1 7Z" fill="#d6d8d6" stroke="#bcbcbc" stroke-width="0.9"/><path d="M3 21C3 17 6 14.500 8 15C10 15.500 10 19 8.500 21Z" fill="#cfcfcf" stroke="#bbb" stroke-width="0.700"/><rect x="12" y="12" width="10.500" height="10.500" rx="1.500" fill="#c4c4c4"/><path d="M15 15L19.500 19.500M19.500 15L15 19.500" stroke="#f3f3f3" stroke-width="1.500" stroke-linecap="round"/></g></svg>
<svg class="ic" style="left:11px;top:443px;width:24px;height:24px" viewBox="0 0 24 24"><g opacity="0.850"><path d="M4 4C7 1.500 16 1 20.500 2.500C23 4 22 9 19 10C16 11 12 9.500 10.500 12C9 15 9.500 19 7 20C4 21 3 17 3.500 13C4 9 2.500 6 4 4Z" fill="#d8d8d6" stroke="#c4c4c2" stroke-width="0.900"/></g></svg>
<svg class="ic" style="left:11px;top:475px;width:24px;height:24px" viewBox="0 0 24 24"><g opacity="0.850"><path d="M3 17C2 12 8 9 11 6C14 3 19 2 21 5C23 8 20 12 16 14C13 16 12 20 8 21C5 22 3.500 20 3 17Z" fill="#d4d4d2" stroke="#c0c0be" stroke-width="0.900"/><path d="M6.500 16.500C6 13 10 11 12.500 8.500C15 6 17.500 5.500 18.500 7C19.500 9 17 11 14.500 12.500C12 14 11 17 8.500 18C7.500 18.300 6.800 17.800 6.500 16.500Z" fill="#e2e2e0" stroke="#cacaca" stroke-width="0.600"/></g></svg>
<svg class="abs" style="left:35.5px;top:197.5px" width="9" height="5" viewBox="0 0 9 5"><path d="M0 0H9L4.5 5Z" fill="#9a9a9a"/></svg>
<svg class="abs" style="left:20px;top:521px" width="7" height="10" viewBox="0 0 7 10"><path d="M0.800 0.800L3.500 3.500L6.200 0.800M0.800 5.300L3.500 8L6.200 5.300" fill="none" stroke="#111" stroke-width="1.300"/></svg>
<div class="abs" style="left:17px;top:542px;width:17px;height:6px;background-image:radial-gradient(circle,#b8b8b8 0.7px,transparent 0.9px);background-size:3px 3px"></div>
<svg class="ic" style="left:11px;top:555px;width:24px;height:24px" viewBox="0 0 24 24"><path d="M3 4L11 8L19 4L21 11L12 18L6 15Z" fill="#5b8ac8" stroke="#34507a" stroke-width="0.900" stroke-linejoin="round"/><path d="M6 15L3 21M11 8L8 13" stroke="#34507a" stroke-width="0.900" fill="none"/><g fill="#f4e23c" stroke="#a88a10" stroke-width="0.600"><circle cx="3" cy="4" r="2"/><circle cx="19" cy="4" r="2"/><circle cx="11" cy="8" r="2"/><circle cx="3" cy="21" r="2"/></g><path d="M12 19L15.500 22.500L22 12.500L15.500 18.500Z" fill="#f4e23c" stroke="#a88a10" stroke-width="0.700" stroke-linejoin="round"/></svg>
<div class="abs" style="left:50px;top:137px;width:1px;height:190px;background:#dadada"></div>
<div class="abs" style="left:291px;top:137px;width:1px;height:450px;background:#e6e6e6"></div>
<span class="ptitle" style="left:55px;top:139px;letter-spacing:-0.31px">Layer</span>
<svg class="abs" style="left:262px;top:141px" width="28" height="13" viewBox="0 0 28 13"><rect x="0.500" y="0.500" width="11" height="11" rx="2" fill="#f4f4f4" stroke="#555" stroke-width="1"/><rect x="4.500" y="2.500" width="5" height="4.500" fill="none" stroke="#555" stroke-width="0.900"/><rect x="2.500" y="4.500" width="5" height="4.500" fill="#f4f4f4" stroke="#555" stroke-width="0.900"/><rect x="15.500" y="0.500" width="11" height="11" rx="2" fill="#f4f4f4" stroke="#555" stroke-width="1"/><path d="M18 3L24 9M24 3L18 9" stroke="#333" stroke-width="1.700"/></svg>
<svg class="abs" style="left:57px;top:161px;overflow:visible" width="20" height="20" viewBox="0 0 20 20"><g transform="rotate(-28 8 10)"><rect x="4" y="5.500" width="8" height="3.200" fill="#f0d83c"/><rect x="4" y="8.700" width="8" height="3" fill="#d8503a"/><rect x="4" y="11.700" width="8" height="3" fill="#5b86ba"/><rect x="7" y="8" width="5" height="6.700" fill="#e0a860" opacity="0.850"/></g><path d="M10.500 10.500L17 4.500" stroke="#e08a2a" stroke-width="1.800" stroke-linecap="round"/></svg>
<svg class="abs" style="left:82px;top:161px;overflow:visible" width="20" height="20" viewBox="0 0 20 20"><rect x="3" y="7.500" width="8.500" height="9.500" fill="none" stroke="#666" stroke-width="0.900"/><rect x="5.500" y="5" width="8.500" height="9.500" fill="#f4f4f4" stroke="#666" stroke-width="0.900"/><path d="M8.500 12V4.500Q8.500 2.500 10 2.500Q11.500 2.500 11.500 4.500V10.500" fill="none" stroke="#3f78b8" stroke-width="1.200"/><circle cx="14" cy="14.500" r="3" fill="#4aa55a" stroke="#8ad09a" stroke-width="0.600" stroke-dasharray="1 0.600"/><circle cx="14" cy="14.500" r="1.400" fill="#e8f4e8"/></svg>
<svg class="abs" style="left:108px;top:161px;overflow:visible" width="20" height="20" viewBox="0 0 20 20"><path d="M1.800 10.500C5 5.500 12 5 16.500 10C12 15 5 15 1.800 10.500Z" fill="#f4f4f4" stroke="#8a8a8a" stroke-width="0.900"/><path d="M3 7.500C6 4.500 12 4 16 7.500" fill="none" stroke="#9a9a9a" stroke-width="0.700"/><circle cx="9" cy="9.800" r="3.300" fill="#5b8fd0" stroke="#3f689a" stroke-width="0.500"/><circle cx="9" cy="9.500" r="1.500" fill="#111"/><path d="M11 12.800H19L15 17.600Z" fill="#333"/></svg>
<svg class="abs" style="left:132px;top:161px;overflow:visible" width="20" height="20" viewBox="0 0 20 20"><path d="M3.200 3H16.400V5L11.300 10.500V17.500L8.500 16V10.500L3.200 5Z" fill="#6a9ad4" stroke="#4a7ab8" stroke-width="0.700" stroke-linejoin="round"/><rect x="3.200" y="2.200" width="13.200" height="2.200" fill="#f0d83c" stroke="#c9a80a" stroke-width="0.400"/></svg>
<svg class="abs" style="left:157px;top:161px;overflow:visible" width="20" height="20" viewBox="0 0 20 20"><text x="7.500" y="12.500" font-family="Liberation Serif,serif" font-size="17" text-anchor="middle" fill="#6a2a70">ε</text><path d="M10.200 10.500H17.700V12.500L15.200 14.500V17.600H12.700V14.500L10.200 12.500Z" fill="#c4c4c4" stroke="#888" stroke-width="0.600"/><rect x="10.200" y="10.200" width="7.500" height="1.500" fill="#e4e4e4" stroke="#999" stroke-width="0.400"/></svg>
<svg class="abs" style="left:198px;top:161px;overflow:visible" width="20" height="20" viewBox="0 0 20 20"><path d="M4.500 3V16M4.500 3H12M4.500 9H8M4.500 14.500H8" stroke="#8a8a8a" stroke-width="0.800" fill="none"/><g fill="#f6a81c" stroke="#d08a0a" stroke-width="0.500"><rect x="6.500" y="7.300" width="3.200" height="3.200"/><rect x="6.500" y="13" width="3.200" height="3.200"/></g><path d="M11.800 3H15.200V11.500H18L13.500 17L9.800 11.500H11.800Z" fill="#4f86c6" stroke="#2f5a90" stroke-width="0.700" stroke-linejoin="round"/></svg>
<svg class="abs" style="left:223px;top:161px;overflow:visible" width="20" height="20" viewBox="0 0 20 20"><path d="M4.500 3V16M4.500 3H9M4.500 9H8M4.500 14.500H8" stroke="#8a8a8a" stroke-width="0.800" fill="none"/><g fill="#f6a81c" stroke="#d08a0a" stroke-width="0.500"><rect x="6.500" y="7.300" width="3.200" height="3.200"/><rect x="6.500" y="13" width="3.200" height="3.200"/></g><path d="M11.800 17H15.200V8.500H18L13.500 3L9.800 8.500H11.800Z" fill="#4f86c6" stroke="#2f5a90" stroke-width="0.700" stroke-linejoin="round"/></svg>
<svg class="abs" style="left:247px;top:161px;overflow:visible" width="20" height="20" viewBox="0 0 20 20"><rect x="3.500" y="3.500" width="11.500" height="11.500" fill="#f6f6f6" stroke="#777" stroke-width="1"/><rect x="11.500" y="12.700" width="6" height="4.500" rx="1.500" fill="#e03030" stroke="#b01818" stroke-width="0.500"/><path d="M13 15H16" stroke="#fff" stroke-width="1.300"/></svg>
<svg class="abs" style="left:182px;top:168.5px" width="9" height="5" viewBox="0 0 9 5"><path d="M0 0H9L4.5 5Z" fill="#444"/></svg>
<div class="tree" style="left:51px;top:187px;width:237px;height:137px">
<div class="abs" style="left:0;top:97px;width:220px;height:21px;background:#f0f0f0"></div>
<div class="abs" style="left:215px;top:-9px;width:4px;height:19px;background:#e3e3e3"></div>
<div class="abs" style="left:215px;top:13px;width:4px;height:19px;background:#e3e3e3"></div>
<div class="abs" style="left:215px;top:35px;width:4px;height:19px;background:#e3e3e3"></div>
<div class="abs" style="left:215px;top:57px;width:4px;height:19px;background:#e3e3e3"></div>
<div class="abs" style="left:215px;top:79px;width:4px;height:19px;background:#e3e3e3"></div>
<div class="abs" style="left:215px;top:101px;width:4px;height:19px;background:#e3e3e3"></div>
<svg class="abs" style="left:29px;top:-9px" width="17" height="17" viewBox="0 0 17 17"><rect x="0.500" y="0.500" width="16" height="16" rx="1.500" fill="#e4e4e4" stroke="#999"/><path d="M3 8.500H7M9.500 8.500H14M3 12.500H7M9.500 12.500H14" stroke="#fff" stroke-width="2"/></svg>
<span class="lt" style="left:55px;top:-10px;letter-spacing:-0.25px">stud_entranti_aq foglio1</span>
<div class="cb" style="left:28px;top:13px"><svg width="15" height="15" viewBox="0 0 15 15" style="position:absolute;left:0;top:0"><path d="M3 7.500L6 11.500L12 2.500" fill="none" stroke="#111" stroke-width="1.900"/></svg></div>
<div class="cb" style="left:28px;top:35px"><svg width="15" height="15" viewBox="0 0 15 15" style="position:absolute;left:0;top:0"><path d="M3 7.500L6 11.500L12 2.500" fill="none" stroke="#111" stroke-width="1.900"/></svg></div>
<div class="cb" style="left:28px;top:57px"><svg width="15" height="15" viewBox="0 0 15 15" style="position:absolute;left:0;top:0"><path d="M3 7.500L6 11.500L12 2.500" fill="none" stroke="#111" stroke-width="1.900"/></svg></div>
<div class="cb" style="left:28px;top:79px"></div>
<div class="cb" style="left:28px;top:101px"></div>
<svg class="abs" style="left:51px;top:12px" width="19" height="19" viewBox="0 0 19 19"><path d="M9.500 1L18 9.500L9.500 18L1 9.500Z" fill="#4fae4a" stroke="#3a8a3a" stroke-width="1"/></svg>
<div class="abs" style="left:52px;top:42px;width:17px;height:1px;background:#222"></div>
<svg class="abs" style="left:54px;top:58px" width="13" height="13" viewBox="0 0 13 13"><circle cx="6.500" cy="6.500" r="4.500" fill="#c4623a" stroke="#5a2a18" stroke-width="1"/></svg>
<svg class="abs" style="left:54px;top:80px" width="13" height="13" viewBox="0 0 13 13"><circle cx="6.500" cy="6.500" r="4.500" fill="#7f8c99" stroke="#333" stroke-width="1"/></svg>
<div class="abs" style="left:51px;top:99px;width:15px;height:16px;border:2px solid #3f6ff0;background:#f0f0f0"></div>
<span class="lt" style="left:77px;top:12px;letter-spacing:-0.15px">lAquila</span>
<span class="lt" style="left:77px;top:34px;letter-spacing:-0.50px">hub</span>
<span class="lt" style="left:77px;top:56px;letter-spacing:-0.33px">comuni_origine</span>
<span class="lt" style="left:77px;top:78px;color:#8a8a8a;font-style:italic;letter-spacing:-0.29px">centroidi_comuni_italia</span>
<span class="lt" style="left:76px;top:100px;font-style:italic;text-decoration:underline;letter-spacing:-0.31px">ProvCM01012019_g_WGS84</span>
<div class="abs" style="left:219px;top:0;width:20px;height:137px;background:#fff"></div>
<div class="abs" style="left:215px;top:0;width:4px;height:137px;background:#fff"></div>
<div class="abs" style="left:215px;top:-9px;width:4px;height:19px;background:#e3e3e3"></div>
<div class="abs" style="left:215px;top:13px;width:4px;height:19px;background:#e3e3e3"></div>
<div class="abs" style="left:215px;top:35px;width:4px;height:19px;background:#e3e3e3"></div>
<div class="abs" style="left:215px;top:57px;width:4px;height:19px;background:#e3e3e3"></div>
<div class="abs" style="left:215px;top:79px;width:4px;height:19px;background:#e3e3e3"></div>
<div class="abs" style="left:215px;top:99px;width:4px;height:19px;background:#e9e9e9"></div>
<div class="abs" style="left:220px;top:0px;width:17px;height:119px;background:#f3f3f3;border-left:1px solid #e4e4e4"></div><div class="abs" style="left:221px;top:17px;width:16px;height:7px;background:#dedede"></div><div class="abs" style="left:221px;top:90px;width:16px;height:13px;background:#dcdcdc"></div><div class="abs" style="left:221px;top:0px;width:16px;height:16px;background:#fafafa;border-bottom:1px solid #dedede"></div><div class="abs" style="left:221px;top:102px;width:16px;height:16px;background:#fafafa;border-top:1px solid #dedede"></div><svg class="abs" style="left:224px;top:6px" width="10" height="6" viewBox="0 0 10 6"><path d="M0 5.500L5 0L10 5.500Z" fill="#444"/></svg><svg class="abs" style="left:224px;top:108px" width="10" height="6" viewBox="0 0 10 6"><path d="M0 0.500L5 6L10 0.500Z" fill="#444"/></svg>
<div class="abs" style="left:0px;top:119px;width:221px;height:18px;background:#f3f3f3;border-top:1px solid #e4e4e4"></div><div class="abs" style="left:158px;top:120px;width:47px;height:17px;background:#dcdcdc"></div><div class="abs" style="left:0px;top:120px;width:16px;height:17px;background:#fafafa;border-right:1px solid #dedede"></div><div class="abs" style="left:204px;top:120px;width:16px;height:17px;background:#fafafa;border-left:1px solid #dedede"></div><svg class="abs" style="left:5px;top:124px" width="6" height="10" viewBox="0 0 6 10"><path d="M5.500 0L0 5L5.500 10Z" fill="#444"/></svg><svg class="abs" style="left:210px;top:124px" width="6" height="10" viewBox="0 0 6 10"><path d="M0.500 0L6 5L0.500 10Z" fill="#444"/></svg>
<div class="abs" style="left:220px;top:119px;width:18px;height:18px;background:#f0f0f0"></div>
</div>
<div class="abs" style="left:164px;top:327px;width:16px;height:2px;background-image:radial-gradient(circle,#b0b0b0 0.6px,transparent 0.8px);background-size:3px 2px"></div>
<div class="abs" style="left:50px;top:332px;width:1px;height:255px;background:#dadada"></div>
<span class="ptitle" style="left:55px;top:334px;letter-spacing:-0.29px">Browser</span>
<svg class="abs" style="left:262px;top:336px" width="28" height="13" viewBox="0 0 28 13"><rect x="0.500" y="0.500" width="11" height="11" rx="2" fill="#f4f4f4" stroke="#555" stroke-width="1"/><rect x="4.500" y="2.500" width="5" height="4.500" fill="none" stroke="#555" stroke-width="0.900"/><rect x="2.500" y="4.500" width="5" height="4.500" fill="#f4f4f4" stroke="#555" stroke-width="0.900"/><rect x="15.500" y="0.500" width="11" height="11" rx="2" fill="#f4f4f4" stroke="#555" stroke-width="1"/><path d="M18 3L24 9M24 3L18 9" stroke="#333" stroke-width="1.700"/></svg>
<svg class="abs" style="left:58px;top:357px;overflow:visible" width="18" height="18" viewBox="0 0 20 20"><rect x="2.500" y="2.500" width="12" height="12" fill="#f8f8f8" stroke="#666" stroke-width="1"/><circle cx="15" cy="15.500" r="3.300" fill="#4aa55a" stroke="#2f7a3e" stroke-width="0.500"/><circle cx="15" cy="15.500" r="1.300" fill="#fff"/></svg>
<svg class="abs" style="left:82px;top:356px;overflow:visible" width="20" height="20" viewBox="0 0 20 20"><g transform="scale(0.830)" fill="#4a8ad0" stroke="#2d66aa" stroke-width="0.700" stroke-linejoin="round"><path d="M3 10.500C3.500 5 8 2 12.500 2.500C15 2.800 17 4 18.300 5.500L21 3V11H13L15.800 8.200C14.500 6.800 13 6.200 11.800 6.200C9 6.200 7.200 8 6.800 10.500Z"/><path d="M21 13.500C20.500 19 16 22 11.500 21.500C9 21.200 7 20 5.700 18.500L3 21V13H11L8.200 15.800C9.500 17.200 11 17.800 12.200 17.800C15 17.800 16.800 16 17.200 13.500Z"/></g></svg>
<svg class="abs" style="left:108px;top:357px;overflow:visible" width="18" height="18" viewBox="0 0 20 20"><path d="M3.200 3H16.400V5L11.300 10.500V17.500L8.500 16V10.500L3.200 5Z" fill="#6a9ad4" stroke="#4a7ab8" stroke-width="0.700" stroke-linejoin="round"/><rect x="3.200" y="2.200" width="13.200" height="2.200" fill="#f0d83c" stroke="#c9a80a" stroke-width="0.400"/></svg>
<svg class="abs" style="left:133px;top:357px;overflow:visible" width="18" height="18" viewBox="0 0 20 20"><path d="M4.500 3V16M4.500 3H9M4.500 9H8M4.500 14.500H8" stroke="#8a8a8a" stroke-width="0.800" fill="none"/><g fill="#f6a81c" stroke="#d08a0a" stroke-width="0.500"><rect x="6.500" y="7.300" width="3.200" height="3.200"/><rect x="6.500" y="13" width="3.200" height="3.200"/></g><path d="M11.800 17H15.200V8.500H18L13.500 3L9.800 8.500H11.800Z" fill="#4f86c6" stroke="#2f5a90" stroke-width="0.700" stroke-linejoin="round"/></svg>
<svg class="abs" style="left:158px;top:357px;overflow:visible" width="18" height="18" viewBox="0 0 20 20"><circle cx="10" cy="10" r="7.500" fill="#5b86c8" stroke="#4672b0" stroke-width="0.800"/><text x="10" y="14.500" font-family="Liberation Serif,serif" font-style="italic" font-weight="bold" font-size="12.500" text-anchor="middle" fill="#fff">i</text></svg>
<div class="tree" style="left:51px;top:382px;width:237px;height:203px">
<svg class="abs" style="left:28px;top:1px;overflow:visible" width="19" height="20" viewBox="0 0 19 20"><path d="M9.500 1L12 7L18.500 7.500L13.500 11.800L15.200 18.200L9.500 14.600L3.800 18.200L5.500 11.800L0.500 7.500L7 7Z" fill="#fdf07a" stroke="#d4b400" stroke-width="1.200" stroke-linejoin="round"/></svg>
<span class="bt" style="left:54px;top:3px;letter-spacing:-0.08px">Preferiti</span>
<svg class="abs" style="left:10px;top:28px" width="6" height="10" viewBox="0 0 6 10"><path d="M0.500 0L5.500 5L0.500 10Z" fill="#4a4a4a"/></svg>
<svg class="abs" style="left:28px;top:23px;overflow:visible" width="19" height="20" viewBox="0 0 19 20"><path d="M3.500 1.500H16.500V15.500H5.500V17.500H1.500V3.500Q1.500 1.500 3.500 1.500Z" fill="#ececec" stroke="#8a8a8a" stroke-width="1"/><path d="M3.500 1.500Q5.500 1.500 5.500 3.500V15.500" fill="none" stroke="#8a8a8a" stroke-width="1"/><path d="M10 0.500H14V8L12 9.800L10 8Z" fill="#5b86ba" stroke="#3f689a" stroke-width="0.700"/></svg>
<span class="bt" style="left:54px;top:25px;letter-spacing:-0.02px">Segnalibri Spaziali</span>
<svg class="abs" style="left:10px;top:50px" width="6" height="10" viewBox="0 0 6 10"><path d="M0.500 0L5.500 5L0.500 10Z" fill="#4a4a4a"/></svg>
<svg class="abs" style="left:28px;top:45px;overflow:visible" width="19" height="20" viewBox="0 0 19 20"><path d="M1 2.500H7.500L18 8V17.500H1Z" fill="#b4d46a" stroke="#777" stroke-width="0.900"/><path d="M1 17.500L18 8" stroke="#e8e8a0" stroke-width="1"/><path d="M9 9L14 7L16 12L11 14Z" fill="#3a8a3a"/><path d="M3 6L7 9M4 12L9 15" stroke="#f0f0a0" stroke-width="0.800"/></svg>
<span class="bt" style="left:54px;top:47px;letter-spacing:0.33px">Home del progetto</span>
<svg class="abs" style="left:10px;top:72px" width="6" height="10" viewBox="0 0 6 10"><path d="M0.500 0L5.500 5L0.500 10Z" fill="#4a4a4a"/></svg>
<svg class="abs" style="left:28px;top:67px;overflow:visible" width="19" height="20" viewBox="0 0 19 20"><path d="M1 2.500H7.500L9.500 4.500H18V17.500H1Z" fill="#f4f4f4" stroke="#777" stroke-width="1"/><path d="M5 11L9.500 6.500L14 11M6.500 10V15H12.500V10" fill="none" stroke="#222" stroke-width="1.300"/></svg>
<span class="bt" style="left:54px;top:69px;letter-spacing:0.25px">Home</span>
<svg class="abs" style="left:10px;top:94px" width="6" height="10" viewBox="0 0 6 10"><path d="M0.500 0L5.500 5L0.500 10Z" fill="#4a4a4a"/></svg>
<svg class="abs" style="left:28px;top:89px;overflow:visible" width="19" height="20" viewBox="0 0 19 20"><path d="M1 2.500H7.500L9.500 4.500H18V17.500H1Z" fill="#ececec" stroke="#8a8a8a" stroke-width="1"/></svg>
<span class="bt" style="left:54px;top:91px;letter-spacing:-0.39px">C:\</span>
<svg class="abs" style="left:10px;top:116px" width="6" height="10" viewBox="0 0 6 10"><path d="M0.500 0L5.500 5L0.500 10Z" fill="#4a4a4a"/></svg>
<svg class="abs" style="left:28px;top:111px;overflow:visible" width="19" height="20" viewBox="0 0 19 20"><path d="M1 2.500H7.500L9.500 4.500H18V17.500H1Z" fill="#ececec" stroke="#8a8a8a" stroke-width="1"/></svg>
<span class="bt" style="left:54px;top:113px;letter-spacing:0.28px">D:\</span>
<svg class="abs" style="left:10px;top:138px" width="6" height="10" viewBox="0 0 6 10"><path d="M0.500 0L5.500 5L0.500 10Z" fill="#4a4a4a"/></svg>
<svg class="abs" style="left:28px;top:133px;overflow:visible" width="19" height="20" viewBox="0 0 19 20"><path d="M1 2.500H7.500L9.500 4.500H18V17.500H1Z" fill="#ececec" stroke="#8a8a8a" stroke-width="1"/></svg>
<span class="bt" style="left:54px;top:135px;letter-spacing:-0.45px">E:\</span>
<svg class="abs" style="left:10px;top:160px" width="6" height="10" viewBox="0 0 6 10"><path d="M0.500 0L5.500 5L0.500 10Z" fill="#4a4a4a"/></svg>
<svg class="abs" style="left:28px;top:155px;overflow:visible" width="19" height="20" viewBox="0 0 19 20"><g transform="scale(0.800) translate(0 1)"><path d="M0.500 7.500L11 3L23.500 7.500L13 13Z" fill="#f3dc5a" stroke="#5a4a08" stroke-width="0.900" stroke-linejoin="round"/><path d="M0.500 7.500V18L13 23.500V13Z" fill="#dfb81c" stroke="#5a4a08" stroke-width="0.900" stroke-linejoin="round"/><path d="M23.500 7.500V18L13 23.500V13Z" fill="#f5e870" stroke="#5a4a08" stroke-width="0.900" stroke-linejoin="round"/><circle cx="11" cy="7" r="6.800" fill="#7f9fd0" stroke="#4a6a9a" stroke-width="0.900"/><path d="M6 5C7.500 2.500 10 2 11.500 3.500C10.500 6 8 7.500 6 5ZM12.500 5.500C15 4 17.500 5.500 16.500 8.500C14.500 10 12.500 8.500 12.500 5.500ZM8 9C10 8.500 11.500 10 11 12.500C9.500 12.500 8 11 8 9Z" fill="#34507a"/></g></svg>
<span class="bt" style="left:54px;top:157px;letter-spacing:-0.57px">GeoPackage</span>
<svg class="abs" style="left:10px;top:182px" width="6" height="10" viewBox="0 0 6 10"><path d="M0.500 0L5.500 5L0.500 10Z" fill="#4a4a4a"/></svg>
<svg class="abs" style="left:28px;top:177px;overflow:visible" width="19" height="20" viewBox="0 0 19 20"><path d="M1.500 19C3 12 6 6 18 2C17.500 8 13 13 5.500 15C9 12 12 9 15 5C10 8 5 13 1.500 19Z" fill="#6f97cc" stroke="#3f689a" stroke-width="0.800" stroke-linejoin="round"/></svg>
<span class="bt" style="left:54px;top:179px;letter-spacing:-0.07px">SpatiaLite</span>
<div class="abs" style="left:220px;top:0px;width:17px;height:186px;background:#f3f3f3;border-left:1px solid #e4e4e4"></div><div class="abs" style="left:221px;top:84px;width:16px;height:85px;background:#dcdcdc"></div><div class="abs" style="left:221px;top:0px;width:16px;height:16px;background:#fafafa;border-bottom:1px solid #dedede"></div><div class="abs" style="left:221px;top:169px;width:16px;height:16px;background:#fafafa;border-top:1px solid #dedede"></div><svg class="abs" style="left:224px;top:6px" width="10" height="6" viewBox="0 0 10 6"><path d="M0 5.500L5 0L10 5.500Z" fill="#444"/></svg><svg class="abs" style="left:224px;top:175px" width="10" height="6" viewBox="0 0 10 6"><path d="M0 0.500L5 6L10 0.500Z" fill="#444"/></svg>
<div class="abs" style="left:0px;top:186px;width:221px;height:18px;background:#f3f3f3;border-top:1px solid #e4e4e4"></div><div class="abs" style="left:0px;top:187px;width:0px;height:17px;background:#dcdcdc"></div><div class="abs" style="left:0px;top:187px;width:16px;height:17px;background:#fafafa;border-right:1px solid #dedede"></div><div class="abs" style="left:204px;top:187px;width:16px;height:17px;background:#fafafa;border-left:1px solid #dedede"></div><svg class="abs" style="left:5px;top:191px" width="6" height="10" viewBox="0 0 6 10"><path d="M5.500 0L0 5L5.500 10Z" fill="#444"/></svg><svg class="abs" style="left:210px;top:191px" width="6" height="10" viewBox="0 0 6 10"><path d="M0.500 0L6 5L0.500 10Z" fill="#444"/></svg>
<div class="abs" style="left:220px;top:186px;width:18px;height:18px;background:#f0f0f0"></div>
</div>
<div class="abs" style="left:50px;top:136px;width:998px;height:1px;background:#c6c6c6"></div>
<div class="abs" style="left:297px;top:137px;width:751px;height:450px;background:#b0b0b0"></div>
<svg class="abs" style="left:298px;top:138px" width="750" height="448" viewBox="298 138 750 448">
<rect x="298" y="138" width="750" height="448" fill="#aad3df"/>
<path d="M480.7 138.0 L550.1 247.0 L568.0 276.0" fill="none" stroke="#8c9be6" stroke-width="0.8" stroke-dasharray="3 3" opacity="0.62"/>
<path d="M537.7 138.0 L470.0 221.6 L404.0 290.0 L350.0 345.0" fill="none" stroke="#8c9be6" stroke-width="0.8" stroke-dasharray="3 3" opacity="0.62"/>
<path d="M540.3 138.0 L585.7 247.0 L600.0 300.0" fill="none" stroke="#8c9be6" stroke-width="0.8" stroke-dasharray="3 3" opacity="0.62"/>
<path d="M604.4 138.0 L583.0 242.0 L569.0 276.0" fill="none" stroke="#8c9be6" stroke-width="0.8" stroke-dasharray="3 3" opacity="0.62"/>
<path d="M627.6 138.0 L589.3 247.0 L570.0 276.0" fill="none" stroke="#8c9be6" stroke-width="0.8" stroke-dasharray="3 3" opacity="0.62"/>
<path d="M548.0 211.8 L541.2 247.0 L569.0 276.0" fill="none" stroke="#8c9be6" stroke-width="0.8" stroke-dasharray="3 3" opacity="0.62"/>
<path d="M319.0 138.0 L305.0 215.0 L298.0 250.0" fill="none" stroke="#8c9be6" stroke-width="0.8" stroke-dasharray="3 3" opacity="0.62"/>
<path d="M298.0 208.0 L450.0 247.0 L569.0 277.0" fill="none" stroke="#8c9be6" stroke-width="0.8" stroke-dasharray="3 3" opacity="0.62"/>
<path d="M298.0 236.0 L400.0 278.0 L480.0 300.0" fill="none" stroke="#8c9be6" stroke-width="0.8" stroke-dasharray="3 3" opacity="0.62"/>
<path d="M569.0 276.0 L680.0 200.0 L762.0 187.0" fill="none" stroke="#8c9be6" stroke-width="0.8" stroke-dasharray="3 3" opacity="0.62"/>
<path d="M762.0 187.0 L724.0 220.0 L672.0 227.0 L650.0 247.0" fill="none" stroke="#8c9be6" stroke-width="0.8" stroke-dasharray="3 3" opacity="0.62"/>
<path d="M745.0 138.0 L800.0 230.0 L812.0 256.0" fill="none" stroke="#8c9be6" stroke-width="0.8" stroke-dasharray="3 3" opacity="0.62"/>
<path d="M752.0 138.0 L812.0 256.0" fill="none" stroke="#8c9be6" stroke-width="0.8" stroke-dasharray="3 3" opacity="0.62"/>
<path d="M762.0 187.0 L790.0 190.0 L840.0 195.0" fill="none" stroke="#8c9be6" stroke-width="0.8" stroke-dasharray="3 3" opacity="0.62"/>
<path d="M762.0 187.0 L775.0 250.0 L770.0 262.0" fill="none" stroke="#8c9be6" stroke-width="0.8" stroke-dasharray="3 3" opacity="0.62"/>
<path d="M431.0 470.0 L452.0 380.0 L470.0 345.0" fill="none" stroke="#8c9be6" stroke-width="0.8" stroke-dasharray="3 3" opacity="0.62"/>
<path d="M595.0 400.0 L560.0 500.0 L532.0 586.0" fill="none" stroke="#8c9be6" stroke-width="0.8" stroke-dasharray="3 3" opacity="0.62"/>
<path d="M795.3 423.9 L737.1 538.4 L714.0 584.0" fill="none" stroke="#8c9be6" stroke-width="0.8" stroke-dasharray="3 3" opacity="0.62"/>
<path d="M741.0 468.5 L723.5 538.4 L712.0 584.0" fill="none" stroke="#8c9be6" stroke-width="0.8" stroke-dasharray="3 3" opacity="0.62"/>
<path d="M812.0 262.0 L790.0 330.0 L770.0 360.0" fill="none" stroke="#8c9be6" stroke-width="0.8" stroke-dasharray="3 3" opacity="0.62"/>
<path d="M300.0 400.0 L350.0 350.0 L480.0 320.0" fill="none" stroke="#8c9be6" stroke-width="0.8" stroke-dasharray="3 3" opacity="0.62"/>
<path d="M462.0 318.0 L478.0 308.0" fill="none" stroke="#8c9be6" stroke-width="0.8" stroke-dasharray="3 3" opacity="0.62"/>
<path d="M452.7 356.5C450.3 355.5 443.1 352.5 438.4 350.3C433.6 348.1 428.9 346.1 424.2 343.1C419.4 340.1 413.3 336.6 409.9 332.5C406.5 328.4 404.7 322.7 403.7 318.2C402.7 313.7 402.7 309.8 403.7 305.7C404.7 301.6 407.4 296.6 409.9 293.3C412.4 290.1 414.6 287.8 418.8 286.2C423.0 284.6 428.7 284.6 434.9 283.5C441.1 282.4 450.3 281.3 456.2 279.9C462.1 278.5 465.7 277.7 470.0 275.1C474.3 272.5 477.7 267.3 482.0 264.1C486.3 260.9 489.6 257.6 496.0 256.1C502.4 254.6 511.7 255.9 520.1 255.1C528.5 254.3 538.5 252.4 546.2 251.1C553.9 249.8 560.9 247.4 566.2 247.4C571.5 247.4 573.5 249.0 578.2 251.1C582.9 253.2 588.2 257.9 594.2 260.1C600.2 262.3 606.6 262.8 614.3 264.1C622.0 265.4 632.3 268.6 640.3 268.1C648.3 267.6 654.9 263.4 662.4 261.1C669.9 258.8 677.2 256.8 685.0 254.5C692.8 252.2 705.0 248.7 709.0 247.5" fill="none" stroke="#b58fcb" stroke-width="1.3" opacity="0.95"/>
<path d="M709.0 247.5C705.8 248.2 696.2 250.1 690.0 251.5C683.8 252.9 677.4 256.1 672.0 256.0C666.6 255.9 662.0 253.4 657.8 250.7C653.6 248.0 649.2 244.1 647.0 240.0C644.8 235.9 644.2 231.3 644.5 226.0C644.8 220.7 646.1 212.6 648.9 208.2C651.7 203.8 656.9 201.4 661.4 199.3C665.9 197.2 670.9 197.1 675.6 195.8C680.3 194.6 684.6 192.0 689.8 191.8C695.0 191.7 700.6 195.3 706.8 194.9C713.0 194.5 722.9 192.0 727.2 189.5C731.5 187.0 730.8 183.1 732.6 179.7C734.4 176.3 734.9 172.4 737.9 169.0C740.9 165.6 745.9 161.5 750.4 159.3C754.9 157.1 759.9 155.8 764.6 155.7C769.4 155.5 774.8 156.5 778.9 158.4C783.0 160.3 787.1 163.5 789.5 167.3C791.9 171.2 793.1 176.8 793.1 181.5C793.1 186.2 791.6 191.1 789.5 195.8C787.4 200.6 782.7 205.8 780.6 210.0C778.5 214.2 778.7 217.6 777.1 220.7C775.5 223.8 771.9 227.4 770.9 228.7" fill="none" stroke="#b58fcb" stroke-width="1.3" opacity="0.95"/>
<path d="M770.9 228.7C775.4 227.8 792.7 226.7 797.6 223.3C802.5 219.9 799.2 213.7 800.2 208.2C801.2 202.7 802.0 195.2 803.8 190.4C805.6 185.7 808.4 182.4 810.9 179.7C813.4 177.0 816.4 179.4 818.5 174.4C820.6 169.4 823.6 155.6 823.8 149.5C823.9 143.4 820.1 139.9 819.4 138.0" fill="none" stroke="#b58fcb" stroke-width="1.3" opacity="0.95"/>
<path d="M452.7 356.5C455.8 360.2 464.9 372.8 471.0 378.6C477.1 384.5 481.4 388.2 489.6 391.6C497.8 395.0 512.5 397.1 520.0 398.7C527.5 400.3 528.4 398.8 534.3 401.5C540.2 404.2 547.6 410.2 555.6 414.8C563.6 419.4 574.0 424.9 582.3 429.0C590.6 433.1 598.4 436.2 605.5 439.7C612.6 443.2 618.1 446.3 625.0 450.0C631.9 453.7 638.6 457.5 646.7 461.9C654.8 466.2 665.1 471.7 673.4 476.1C681.7 480.6 689.9 485.5 696.6 488.6C703.3 491.7 706.5 492.5 713.7 494.6C720.9 496.7 731.0 499.4 740.0 501.0C749.0 502.6 760.5 504.5 768.0 504.0C775.5 503.5 780.1 500.4 785.0 498.0C789.9 495.6 793.4 493.4 797.2 489.4C801.0 485.4 805.2 479.6 808.0 474.0C810.8 468.4 812.1 463.3 813.9 456.0C815.6 448.7 818.1 437.3 818.5 430.0C818.9 422.7 818.2 420.7 816.0 412.0C813.8 403.3 808.2 388.3 805.0 378.0C801.8 367.7 798.2 356.3 797.0 350.0C795.8 343.7 797.4 342.7 797.8 340.0C798.2 337.3 798.1 337.1 799.6 334.0C801.1 330.9 805.5 323.7 806.7 321.6" fill="none" stroke="#b58fcb" stroke-width="1.3" opacity="0.95"/>
<path d="M806.7 321.6C809.7 322.7 817.1 327.5 824.5 328.2C831.9 328.9 843.2 327.2 851.2 326.0C859.2 324.8 867.2 323.1 872.6 320.7C878.0 318.3 879.4 316.2 883.3 311.8C887.1 307.4 891.6 300.2 895.7 294.0C899.9 287.8 905.2 278.9 908.2 274.4C911.2 269.9 910.2 271.9 913.6 267.0C917.0 262.1 923.8 251.9 928.3 245.3C932.8 238.7 936.7 233.2 940.9 227.4C945.1 221.6 949.4 216.2 953.6 210.6C957.8 205.0 962.4 199.1 966.2 193.8C970.1 188.5 973.2 183.6 976.7 179.0C980.2 174.4 984.3 170.6 987.2 166.4C990.1 162.2 992.5 157.4 994.0 154.0C995.5 150.6 996.0 148.7 996.5 146.0C997.0 143.3 996.7 139.3 996.7 138.0" fill="none" stroke="#b58fcb" stroke-width="1.3" opacity="0.95"/>
<path d="M297.0 402.1C300.2 402.5 309.2 402.8 316.4 404.5C323.6 406.2 333.4 408.4 340.2 412.3C347.0 416.2 352.9 420.0 357.2 427.6C361.4 435.2 365.1 449.1 365.7 458.2C366.3 467.2 363.7 475.7 360.6 481.9C357.5 488.1 351.0 489.8 347.0 495.5C343.0 501.2 340.2 509.1 336.8 515.9C333.4 522.7 330.6 531.2 326.6 536.3C322.6 541.4 317.9 543.7 313.0 546.5C308.1 549.3 299.7 552.2 297.0 553.3" fill="none" stroke="#b58fcb" stroke-width="1.3" opacity="0.95"/>
<path d="M297.0 575.0C299.1 576.5 304.1 582.9 309.6 583.9C315.1 584.9 323.8 580.8 330.0 581.2C336.2 581.6 344.2 585.6 347.0 586.5" fill="none" stroke="#b58fcb" stroke-width="1.3" opacity="0.95"/>
<path d="M472.7 380.0C475.0 381.7 480.8 387.6 486.3 390.2C491.9 392.8 502.7 394.4 506.0 395.3" fill="none" stroke="#b58fcb" stroke-width="1.3" opacity="0.95"/>
<path d="M657.6 587.0C656.1 584.9 650.9 578.8 648.9 574.2C646.9 569.6 645.5 564.7 645.9 559.3C646.3 553.9 648.0 546.5 651.4 542.0C654.8 537.5 661.3 534.0 666.3 532.0C671.2 530.0 675.7 529.6 681.1 530.0C686.5 530.4 693.1 531.7 698.5 534.5C703.9 537.3 708.4 543.4 713.4 546.9C718.4 550.4 723.8 552.3 728.3 555.6C732.8 558.9 737.8 562.9 740.7 566.8C743.6 570.7 744.8 575.8 745.7 579.2C746.6 582.6 746.1 585.7 746.2 587.0" fill="none" stroke="#b58fcb" stroke-width="1.3" opacity="0.95"/>
<circle cx="548" cy="210.9" r="29.4" fill="none" stroke="#b58fcb" stroke-width="1.300"/>
<circle cx="431.2" cy="473.8" r="34" fill="none" stroke="#b58fcb" stroke-width="1.300"/>
<circle cx="530.5" cy="595" r="29.6" fill="none" stroke="#b58fcb" stroke-width="1.300"/>
<path d="M427.7 306.6 L465.1 305.7 L474.0 308.4 L466.9 321.8 L456.2 327.1 L436.6 327.1 L429.5 318.2Z" fill="none" stroke="#8fc0a0" stroke-width="0.700"/>
<path d="M941 158Q958 168 972 156Q980 148 979 139M944 161Q960 172 975 159Q984 150 983 139M952 156Q964 162 970 152Q974 146 973 139" fill="none" stroke="#8fc0a0" stroke-width="0.600"/>
<path d="M506.5 283.4 L510.0 289.6 L512.7 298.5 L521.6 304.7 L530.5 302.0 L541.2 296.7 L540.3 287.8 L544.8 280.7 L553.7 283.4 L562.6 278.0 L567.9 276.2 L572.4 281.6 L576.8 286.9 L587.5 291.4 L594.6 298.5 L605.3 304.7 L616.0 306.5 L626.7 302.9 L639.1 298.5 L650.7 298.4 L666.7 298.4 L684.5 294.3 L698.8 289.8 L711.2 283.6 L718.3 276.5 L729.0 273.8 L736.1 271.2 L743.3 275.6 L753.9 278.8 L764.6 272.9 L771.7 264.9 L791.3 257.8 L800.2 251.6 L810.9 255.1 L807.3 259.6 L800.2 275.6 L796.7 286.3 L789.5 298.7 L780.6 311.2 L768.2 320.1 L770.9 332.6 L767.3 343.3 L767.2 350.7 L760.1 359.6 L760.1 372.0 L762.8 386.3 L776.1 391.6 L777.9 396.0 L772.6 398.7 L774.4 409.4 L781.5 414.8 L786.8 423.7 L790.5 425.8 L783.7 431.7 L774.0 443.3 L769.1 449.1 L766.2 455.0 L769.1 463.7 L772.0 472.0 L766.2 475.9 L760.4 470.9 L754.6 470.9 L748.7 468.5 L741.0 468.5 L731.3 468.9 L721.6 467.6 L711.8 463.1 L704.1 461.7 L698.3 458.8 L692.4 449.1 L686.6 437.5 L678.8 429.7 L665.2 423.9 L651.7 421.6 L640.0 422.0 L633.9 422.8 L619.7 414.8 L609.0 411.2 L596.6 400.5 L580.5 393.4 L568.1 384.5 L555.6 375.6 L541.4 373.8 L530.7 366.8 L521.6 365.2 L505.6 364.4 L496.7 359.0 L487.8 351.9 L478.9 344.8 L474.5 335.0 L478.0 321.6 L482.5 311.0 L486.0 304.7 L493.1 299.4 L503.8 293.1Z" fill="#f2efe9" stroke="#c9b8b4" stroke-width="0.800" stroke-linejoin="round"/>
<path d="M849.6 138.0 L854.1 147.7 L861.2 158.4 L868.3 161.9 L872.8 167.3 L868.3 178.0 L861.2 187.7 L848.7 189.5 L832.7 197.5 L829.2 204.7 L836.3 211.8 L843.4 220.7 L838.1 231.4 L833.4 237.0 L830.7 247.7 L824.5 253.9 L814.7 258.4 L812.0 265.5 L813.8 276.2 L814.7 288.6 L820.0 295.8 L829.8 300.2 L844.1 297.5 L854.8 298.4 L863.7 292.2 L868.1 283.3 L868.1 269.0 L876.1 254.8 L882.4 244.1 L896.8 238.5 L907.5 227.8 L909.3 215.3 L903.9 199.3 L902.2 185.1 L907.5 172.6 L918.2 163.7 L932.4 155.7 L943.1 152.1 L950.2 153.9 L960.9 153.0 L965.4 147.7 L968.0 138.0Z" fill="#f2efe9" stroke="#c9b8b4" stroke-width="0.800" stroke-linejoin="round"/>
<path d="M297.0 459.8 L316.4 442.9 L328.3 437.1 L331.7 446.3 L338.5 463.2 L330.0 478.5 L319.8 492.1 L311.3 509.1 L302.8 521.0 L297.0 521.0Z" fill="#f2efe9" stroke="#e0cdb8" stroke-width="0.700"/>
<path d="M631.9 301.4C633.5 298.2 637.8 299.1 641.7 299.4C645.6 299.7 652.6 300.1 655.2 303.3C657.8 306.5 658.2 314.9 657.2 318.8C656.2 322.7 652.6 325.0 649.4 326.6C646.2 328.2 640.7 329.8 637.8 328.5C634.9 327.2 632.9 323.3 631.9 318.8C630.9 314.3 630.3 304.6 631.9 301.4Z" fill="#cfe3c3" opacity="0.38"/>
<path d="M678.5 298.4C681.1 296.1 689.9 295.4 696.0 293.6C702.1 291.8 709.6 287.8 715.4 287.8C721.2 287.8 726.5 291.3 731.0 293.6C735.5 295.9 741.0 298.8 742.6 301.4C744.2 304.0 743.3 307.2 740.7 309.1C738.1 311.0 731.3 311.4 727.1 313.0C722.9 314.6 719.3 317.4 715.4 318.8C711.5 320.2 708.3 322.0 703.8 321.7C699.3 321.4 692.2 319.3 688.3 316.9C684.4 314.5 682.1 310.3 680.5 307.2C678.9 304.1 675.9 300.7 678.5 298.4Z" fill="#cfe3c3" opacity="0.38"/>
<path d="M547.7 344.1C548.4 342.5 554.2 341.8 557.4 342.1C560.6 342.4 564.2 346.3 567.1 346.0C570.0 345.7 572.3 340.5 574.9 340.2C577.5 339.9 580.0 344.4 582.6 344.1C585.2 343.8 587.5 338.3 590.4 338.3C593.3 338.3 597.2 341.9 600.1 344.1C603.0 346.4 606.9 349.2 607.9 351.8C608.9 354.4 608.2 358.0 605.9 359.6C603.6 361.2 597.5 362.2 594.3 361.6C591.1 361.0 589.7 356.4 586.5 355.7C583.3 355.0 578.8 357.7 574.9 357.7C571.0 357.7 566.8 356.7 563.2 355.7C559.6 354.7 556.1 353.7 553.5 351.8C550.9 349.9 547.1 345.7 547.7 344.1Z" fill="#cfe3c3" opacity="0.38"/>
<path d="M574.0 315.0C574.8 313.5 579.5 313.0 581.0 314.0C582.5 315.0 583.8 319.5 583.0 321.0C582.2 322.5 577.5 324.0 576.0 323.0C574.5 322.0 573.2 316.5 574.0 315.0Z" fill="#cfe3c3" opacity="0.38"/>
<path d="M627.8 359.4C629.2 357.1 637.6 355.7 640.0 357.4C642.3 359.1 643.4 367.2 642.0 369.5C640.7 371.9 634.3 373.2 631.9 371.6C629.5 369.9 626.5 361.8 627.8 359.4Z" fill="#cfe3c3" opacity="0.38"/>
<path d="M688.5 408.0C690.5 404.6 703.0 401.9 706.7 403.9C710.4 405.9 712.8 416.7 710.8 420.1C708.7 423.5 698.3 426.2 694.6 424.1C690.9 422.1 686.5 411.3 688.5 408.0Z" fill="#cfe3c3" opacity="0.38"/>
<path d="M492.0 336.0C492.7 333.5 496.7 332.3 498.0 334.0C499.3 335.7 500.7 343.5 500.0 346.0C499.3 348.5 495.3 350.7 494.0 349.0C492.7 347.3 491.3 338.5 492.0 336.0Z" fill="#cfe3c3" opacity="0.38"/>
<path d="M497.0 356.0C498.2 354.2 504.8 351.3 507.0 352.0C509.2 352.7 511.2 358.2 510.0 360.0C508.8 361.8 502.2 363.7 500.0 363.0C497.8 362.3 495.8 357.8 497.0 356.0Z" fill="#cfe3c3" opacity="0.38"/>
<path d="M686.5 355.4C688.5 352.7 699.3 350.0 702.7 351.3C706.0 352.7 708.7 360.8 706.7 363.5C704.7 366.2 693.9 368.9 690.5 367.5C687.2 366.2 684.5 358.1 686.5 355.4Z" fill="#cfe3c3" opacity="0.38"/>
<path d="M726.9 399.9C729.0 396.8 739.7 393.8 743.1 395.8C746.5 397.8 749.2 409.0 747.2 412.0C745.1 415.0 734.4 416.0 731.0 414.0C727.6 412.0 724.9 402.9 726.9 399.9Z" fill="#cfe3c3" opacity="0.38"/>
<path d="M660.0 300.0C661.3 297.8 669.3 296.0 672.0 297.0C674.7 298.0 677.3 303.8 676.0 306.0C674.7 308.2 666.7 311.0 664.0 310.0C661.3 309.0 658.7 302.2 660.0 300.0Z" fill="#cfe3c3" opacity="0.38"/>
<path d="M745.0 300.0C745.3 297.0 755.8 290.7 760.0 290.0C764.2 289.3 770.3 293.0 770.0 296.0C769.7 299.0 762.2 307.3 758.0 308.0C753.8 308.7 744.7 303.0 745.0 300.0Z" fill="#cfe3c3" opacity="0.38"/>
<circle cx="748.4" cy="330.5" r="17.5" fill="#cfe3c3" fill-opacity="0.40" stroke="#ecc89c" stroke-width="0.900"/>
<circle cx="749" cy="329" r="6" fill="#e8e4e0" opacity="0.900"/>
<path d="M738.0 322.0C739.2 319.3 742.0 318.2 745.0 318.0C748.0 317.8 753.5 319.0 756.0 321.0C758.5 323.0 760.2 326.8 760.0 330.0C759.8 333.2 757.7 338.0 755.0 340.0C752.3 342.0 746.8 343.0 744.0 342.0C741.2 341.0 739.0 337.3 738.0 334.0C737.0 330.7 736.8 324.7 738.0 322.0Z" fill="none" stroke="#9cc890" stroke-width="0.600"/>
<path d="M678.5 298.4C681.1 296.1 689.9 295.4 696.0 293.6C702.1 291.8 709.6 287.8 715.4 287.8C721.2 287.8 726.5 291.3 731.0 293.6C735.5 295.9 741.0 298.8 742.6 301.4C744.2 304.0 743.3 307.2 740.7 309.1C738.1 311.0 731.3 311.4 727.1 313.0C722.9 314.6 719.3 317.4 715.4 318.8C711.5 320.2 708.3 322.0 703.8 321.7C699.3 321.4 692.2 319.3 688.3 316.9C684.4 314.5 682.1 310.3 680.5 307.2C678.9 304.1 675.9 300.7 678.5 298.4Z" fill="none" stroke="#9cc890" stroke-width="0.700"/>
<path d="M633.0 303.0C634.5 300.2 638.5 300.7 642.0 301.0C645.5 301.3 651.8 302.3 654.0 305.0C656.2 307.7 656.0 313.7 655.0 317.0C654.0 320.3 650.8 323.5 648.0 325.0C645.2 326.5 640.5 327.2 638.0 326.0C635.5 324.8 633.8 321.8 633.0 318.0C632.2 314.2 631.5 305.8 633.0 303.0Z" fill="none" stroke="#9cc890" stroke-width="0.600"/>
<path d="M547.7 344.1C548.4 342.5 554.2 341.8 557.4 342.1C560.6 342.4 564.2 346.3 567.1 346.0C570.0 345.7 572.3 340.5 574.9 340.2C577.5 339.9 580.0 344.4 582.6 344.1C585.2 343.8 587.5 338.3 590.4 338.3C593.3 338.3 597.2 341.9 600.1 344.1C603.0 346.4 606.9 349.2 607.9 351.8C608.9 354.4 608.2 358.0 605.9 359.6C603.6 361.2 597.5 362.2 594.3 361.6C591.1 361.0 589.7 356.4 586.5 355.7C583.3 355.0 578.8 357.7 574.9 357.7C571.0 357.7 566.8 356.7 563.2 355.7C559.6 354.7 556.1 353.7 553.5 351.8C550.9 349.9 547.1 345.7 547.7 344.1Z" fill="none" stroke="#9cc890" stroke-width="0.700"/>
<path d="M873.0 167.2C877.4 161.6 886.7 161.0 891.7 163.5C896.6 166.0 899.7 173.4 902.8 182.1C905.9 190.8 911.5 206.3 910.3 215.6C909.0 224.9 901.6 233.6 895.4 238.0C889.2 242.3 878.6 244.2 873.0 241.7C867.5 239.2 863.1 230.5 861.9 223.1C860.6 215.6 863.7 206.3 865.6 197.0C867.5 187.7 868.7 172.8 873.0 167.2Z" fill="#cfe3c3" opacity="0.38"/>
<path d="M820.9 256.6C825.6 251.0 839.5 242.3 847.0 241.7C854.4 241.1 861.9 246.7 865.6 252.9C869.3 259.1 871.8 272.1 869.3 278.9C866.8 285.7 857.5 292.0 850.7 293.8C843.9 295.7 833.6 293.2 828.4 290.1C823.1 287.0 820.3 280.8 819.1 275.2C817.8 269.6 816.3 262.2 820.9 256.6Z" fill="#cfe3c3" opacity="0.38"/>
<path d="M847.0 215.6C850.1 211.9 861.3 209.4 865.6 211.9C869.9 214.4 874.3 225.6 873.0 230.5C871.8 235.5 862.5 241.1 858.2 241.7C853.8 242.3 848.8 238.6 847.0 234.2C845.1 229.9 843.9 219.4 847.0 215.6Z" fill="#cfe3c3" opacity="0.38"/>
<path d="M832.1 260.3C835.2 256.6 842.0 251.3 847.0 251.0C851.9 250.7 858.8 253.8 861.9 258.4C865.0 263.1 867.5 273.6 865.6 278.9C863.7 284.2 855.7 288.8 850.7 290.1C845.7 291.3 839.5 289.2 835.8 286.4C832.1 283.6 829.0 277.7 828.4 273.3C827.7 269.0 829.0 264.0 832.1 260.3Z" fill="none" stroke="#9cc890" stroke-width="0.700"/>
<path d="M874.9 193.3C878.3 190.5 887.6 188.6 891.7 191.4C895.7 194.2 899.1 203.5 899.1 210.0C899.1 216.6 895.4 227.7 891.7 230.5C887.9 233.3 880.2 230.5 876.8 226.8C873.4 223.1 871.5 213.8 871.2 208.2C870.9 202.6 871.5 196.1 874.9 193.3Z" fill="none" stroke="#9cc890" stroke-width="0.700"/>
<path d="M299.0 465.0C301.2 458.7 308.2 451.7 312.0 450.0C315.8 448.3 321.0 450.8 322.0 455.0C323.0 459.2 320.8 469.2 318.0 475.0C315.2 480.8 308.2 487.8 305.0 490.0C301.8 492.2 300.0 492.2 299.0 488.0C298.0 483.8 296.8 471.3 299.0 465.0Z" fill="#cfe3c3" opacity="0.900"/>
<path d="M565.1 311.1C562.9 313.4 556.1 320.5 551.6 324.7C547.1 328.9 540.3 334.4 538.0 336.3" fill="none" stroke="#c2deee" stroke-width="0.800"/>
<path d="M524.4 346.0 L534.1 338.3" fill="none" stroke="#c2deee" stroke-width="0.800"/>
<path d="M694.1 328.5C696.4 330.8 703.2 339.5 707.7 342.1C712.2 344.7 717.4 342.2 721.3 344.1C725.2 346.1 728.1 350.2 731.0 353.8C733.9 357.4 735.2 362.4 738.7 365.4C742.2 368.4 749.8 370.9 752.0 372.0" fill="none" stroke="#c2deee" stroke-width="0.800"/>
<path d="M670.3 363.5C673.0 366.8 681.1 379.0 686.5 383.7C691.9 388.4 700.0 390.4 702.7 391.8" fill="none" stroke="#c2deee" stroke-width="0.800"/>
<path d="M532.8 331.1C534.1 334.5 541.6 345.3 540.9 351.3C540.2 357.4 530.8 364.8 528.8 367.5" fill="none" stroke="#c2deee" stroke-width="0.800"/>
<path d="M613.7 383.7 L629.9 399.9" fill="none" stroke="#c2deee" stroke-width="0.800"/>
<path d="M718.8 420.1C721.5 423.5 731.7 434.2 735.0 440.3C738.4 446.4 738.4 453.8 739.1 456.5" fill="none" stroke="#c2deee" stroke-width="0.800"/>
<path d="M646.0 333.0C647.3 335.0 651.3 341.3 654.0 345.0C656.7 348.7 660.7 353.3 662.0 355.0" fill="none" stroke="#c2deee" stroke-width="0.800"/>
<path d="M590.0 362.0C591.0 364.3 593.0 371.7 596.0 376.0C599.0 380.3 606.0 386.0 608.0 388.0" fill="none" stroke="#c2deee" stroke-width="0.800"/>
<path d="M700.0 408.0C702.0 410.0 709.3 415.3 712.0 420.0C714.7 424.7 715.3 433.3 716.0 436.0" fill="none" stroke="#c2deee" stroke-width="0.800"/>
<path d="M560.0 360.0C561.0 362.0 565.7 368.3 566.0 372.0C566.3 375.7 562.7 380.3 562.0 382.0" fill="none" stroke="#c2deee" stroke-width="0.800"/>
<path d="M547.7 299.4C549.0 299.2 552.8 299.0 555.4 298.4C558.0 297.8 561.2 296.6 563.2 295.5C565.2 294.4 566.5 292.3 567.1 291.7" fill="none" stroke="#f5d3a2" stroke-width="0.900"/>
<path d="M551.6 309.1C551.3 310.7 550.9 315.6 549.6 318.8C548.3 322.0 545.4 325.2 543.8 328.5C542.2 331.8 540.7 334.7 539.9 338.3C539.1 341.9 539.4 346.7 538.9 349.9C538.4 353.1 536.5 354.8 537.0 357.7C537.5 360.6 539.4 364.8 541.8 367.4C544.2 370.0 550.0 372.2 551.6 373.2" fill="none" stroke="#f5d3a2" stroke-width="0.900"/>
<path d="M582.6 295.5C582.5 297.4 582.8 303.9 581.7 307.2C580.6 310.4 577.6 312.4 575.8 315.0C574.0 317.6 572.6 320.4 571.0 322.7C569.4 324.9 566.1 326.2 566.1 328.5C566.1 330.8 568.9 334.4 571.0 336.3C573.1 338.2 577.4 339.6 578.7 340.2" fill="none" stroke="#f5d3a2" stroke-width="0.900"/>
<path d="M586.5 313.0C587.8 314.9 592.3 320.8 594.3 324.7C596.2 328.6 596.3 333.1 598.2 336.3C600.1 339.5 604.6 342.8 605.9 344.1" fill="none" stroke="#f5d3a2" stroke-width="0.900"/>
<path d="M516.6 353.8C518.5 354.4 524.7 357.1 528.3 357.7C531.9 358.3 536.4 357.7 538.0 357.7" fill="none" stroke="#f5d3a2" stroke-width="0.900"/>
<path d="M578.7 340.2C579.4 342.5 581.3 349.6 582.6 353.8C583.9 358.0 585.5 361.5 586.5 365.4C587.5 369.3 587.1 373.2 588.4 377.1C589.7 381.0 592.0 385.8 594.3 388.7C596.6 391.6 600.7 393.6 602.0 394.6" fill="none" stroke="#f5d3a2" stroke-width="0.900"/>
<path d="M551.6 373.2C553.2 374.5 558.1 378.4 561.3 381.0C564.5 383.6 567.1 386.1 571.0 388.7C574.9 391.3 579.8 394.9 584.6 396.5C589.4 398.1 597.4 397.8 600.0 398.0" fill="none" stroke="#f5d3a2" stroke-width="0.900"/>
<path d="M489.4 309.1C491.3 308.3 497.2 305.3 501.1 304.3C505.0 303.3 509.2 302.8 512.7 303.3C516.2 303.8 520.8 306.6 522.4 307.2" fill="none" stroke="#f5d3a2" stroke-width="0.900"/>
<path d="M483.6 318.8C483.3 320.8 482.5 327.6 481.7 330.5C480.9 333.4 478.4 333.7 478.7 336.3C479.0 338.9 481.5 343.1 483.6 346.0C485.7 348.9 490.1 352.5 491.4 353.8" fill="none" stroke="#f5d3a2" stroke-width="0.900"/>
<path d="M522.4 307.2C524.5 306.2 530.8 302.3 535.0 301.0C539.2 299.7 545.6 299.7 547.7 299.4" fill="none" stroke="#f5d3a2" stroke-width="0.900"/>
<path d="M639.7 332.4C642.3 331.4 650.0 327.6 655.2 326.6C660.4 325.6 666.3 325.8 670.8 326.6C675.3 327.4 678.5 331.8 682.4 331.5C686.3 331.2 689.9 326.3 694.1 324.7C698.3 323.1 702.9 322.7 707.7 321.7C712.6 320.7 719.3 319.9 723.2 318.8C727.1 317.7 729.7 315.6 731.0 315.0" fill="none" stroke="#f5d3a2" stroke-width="0.900"/>
<path d="M676.6 299.4C676.9 301.7 676.9 308.5 678.5 313.0C680.1 317.5 685.0 324.3 686.3 326.6" fill="none" stroke="#f5d3a2" stroke-width="0.900"/>
<path d="M674.7 357.7C675.3 360.0 676.9 367.4 678.5 371.3C680.1 375.2 683.1 376.8 684.4 381.0C685.7 385.2 685.4 391.3 686.3 396.5C687.2 401.7 687.7 406.4 690.0 412.0C692.3 417.6 698.3 427.0 700.0 430.0" fill="none" stroke="#f5d3a2" stroke-width="0.900"/>
<path d="M665.0 365.4C665.3 368.0 666.9 375.8 666.9 381.0C666.9 386.2 664.8 391.3 665.0 396.5C665.2 401.7 667.5 409.4 668.0 412.0" fill="none" stroke="#f5d3a2" stroke-width="0.900"/>
<path d="M649.4 369.3C647.5 370.3 641.0 373.2 637.8 375.1C634.6 377.1 633.3 379.2 630.0 381.0C626.7 382.8 620.0 385.2 618.0 386.0" fill="none" stroke="#f5d3a2" stroke-width="0.900"/>
<path d="M638.0 387.7C640.0 390.4 644.7 398.5 650.1 403.9C655.5 409.3 662.2 416.7 670.3 420.1C678.4 423.5 690.5 420.8 698.6 424.1C706.7 427.5 715.5 437.6 718.8 440.3" fill="none" stroke="#f5d3a2" stroke-width="0.900"/>
<path d="M682.4 363.5C687.2 366.8 702.0 379.0 710.8 383.7C719.5 388.4 726.9 391.1 735.0 391.8C743.1 392.5 755.2 388.4 759.3 387.7" fill="none" stroke="#f5d3a2" stroke-width="0.900"/>
<path d="M718.8 440.3C721.5 443.0 729.6 453.1 735.0 456.5C740.4 459.9 746.5 461.9 751.2 460.5C755.9 459.2 761.3 450.4 763.3 448.4" fill="none" stroke="#f5d3a2" stroke-width="0.900"/>
<path d="M743.1 391.8C744.5 395.1 747.2 407.3 751.2 412.0C755.2 416.7 762.0 418.1 767.4 420.1C772.8 422.1 780.9 423.5 783.6 424.1" fill="none" stroke="#f5d3a2" stroke-width="0.900"/>
<path d="M706.7 440.3C708.7 441.7 715.5 443.7 718.8 448.4C722.2 453.1 725.6 465.3 726.9 468.6" fill="none" stroke="#f5d3a2" stroke-width="0.900"/>
<path d="M605.9 344.1C606.9 345.4 609.0 349.7 612.0 352.0C615.0 354.3 619.3 356.3 624.0 358.0C628.7 359.7 637.3 361.3 640.0 362.0" fill="none" stroke="#f5d3a2" stroke-width="0.900"/>
<path d="M700.0 430.0C702.0 431.7 707.7 437.3 712.0 440.0C716.3 442.7 721.3 444.3 726.0 446.0C730.7 447.7 737.7 449.3 740.0 450.0" fill="none" stroke="#f5d3a2" stroke-width="0.900"/>
<path d="M726.0 446.0C725.3 447.7 722.0 452.7 722.0 456.0C722.0 459.3 725.3 464.3 726.0 466.0" fill="none" stroke="#f5d3a2" stroke-width="0.900"/>
<path d="M740.0 385.0C742.0 386.7 747.3 392.5 752.0 395.0C756.7 397.5 765.3 399.2 768.0 400.0" fill="none" stroke="#f5d3a2" stroke-width="0.900"/>
<path d="M865.6 141.2C868.1 144.3 875.5 156.1 880.5 159.8C885.5 163.5 892.9 162.9 895.4 163.5" fill="none" stroke="#f5d3a2" stroke-width="0.900"/>
<path d="M847.0 197.0C851.3 198.3 863.7 203.8 873.0 204.5C882.3 205.1 897.9 201.4 902.8 200.7" fill="none" stroke="#f5d3a2" stroke-width="0.900"/>
<path d="M835.8 226.8C838.9 229.3 851.9 236.7 854.4 241.7C856.9 246.7 851.3 254.1 850.7 256.6" fill="none" stroke="#f5d3a2" stroke-width="0.900"/>
<path d="M813.5 278.9C817.2 280.2 828.4 284.5 835.8 286.4C843.3 288.2 854.4 289.5 858.2 290.1" fill="none" stroke="#f5d3a2" stroke-width="0.900"/>
<path d="M618.3 307.8C617.6 309.1 616.3 312.6 614.4 315.5C612.5 318.4 608.1 320.7 606.6 325.2C605.1 329.7 605.0 337.8 605.6 342.7C606.2 347.6 609.9 349.2 610.5 354.4C611.1 359.6 610.3 368.6 609.5 373.8C608.7 379.0 606.9 382.2 605.6 385.4C604.3 388.6 602.4 391.9 601.7 393.2" fill="none" stroke="#9a9098" stroke-width="0.700" opacity="0.800"/>
<path d="M606.6 341.7C608.5 341.6 614.7 340.1 618.3 340.8C621.9 341.5 625.4 343.0 628.0 345.6C630.6 348.2 631.5 353.4 633.8 356.3C636.1 359.2 639.0 361.8 641.6 363.1C644.2 364.4 646.4 364.3 649.3 364.1C652.2 363.9 657.4 362.4 659.0 362.1" fill="none" stroke="#9a9098" stroke-width="0.700" opacity="0.800"/>
<path d="M649.3 364.1C648.6 365.4 648.0 369.5 645.4 371.8C642.8 374.1 636.7 375.4 633.8 377.7C630.9 380.0 630.6 383.9 628.0 385.4C625.4 386.8 621.5 387.0 618.3 386.4C615.0 385.8 610.6 381.8 608.5 381.6C606.4 381.4 606.1 384.8 605.6 385.4" fill="none" stroke="#9a9098" stroke-width="0.700" opacity="0.800"/>
<path d="M628.0 385.4C629.0 387.3 631.9 393.9 633.8 397.1C635.7 400.4 639.0 402.3 639.6 404.9C640.2 407.5 638.7 410.0 637.7 412.6C636.7 415.2 634.4 419.2 633.8 420.5" fill="none" stroke="#9a9098" stroke-width="0.700" opacity="0.800"/>
<path d="M760.0 378.0C759.0 378.6 756.8 380.4 754.2 381.6C751.6 382.8 748.1 384.1 744.5 385.4C740.9 386.7 735.4 387.4 732.8 389.3C730.2 391.2 730.2 394.4 728.9 397.1C727.6 399.9 727.6 404.5 725.0 405.8C722.4 407.1 716.9 405.5 713.4 404.9C709.9 404.2 706.0 401.8 703.7 401.9C701.4 402.0 700.4 405.1 699.8 405.8" fill="none" stroke="#9a9098" stroke-width="0.700" opacity="0.800"/>
<path d="M698.6 403.9C700.6 406.6 709.1 414.0 710.8 420.1C712.4 426.2 706.7 435.3 708.7 440.3C710.8 445.4 720.5 448.7 722.9 450.4" fill="none" stroke="#9a9098" stroke-width="0.700" opacity="0.800"/>
<path d="M722.9 450.4C723.6 453.1 723.6 463.6 726.9 466.6C730.3 469.6 737.7 470.3 743.1 468.6C748.5 466.9 756.6 458.5 759.3 456.5" fill="none" stroke="#9a9098" stroke-width="0.700" opacity="0.800"/>
<path d="M486.3 310.9C489.3 311.9 498.1 317.0 504.5 317.0C510.9 317.0 521.0 308.9 524.7 310.9C528.4 312.9 528.8 322.3 526.7 329.1C524.7 335.8 517.6 346.8 512.6 351.3C507.5 355.9 499.1 355.4 496.4 356.2" fill="none" stroke="#9a9098" stroke-width="0.700" opacity="0.800"/>
<path d="M680.4 298.8C681.4 302.8 682.8 317.6 686.5 323.0C690.2 328.4 697.3 330.4 702.7 331.1C708.1 331.8 712.1 329.4 718.8 327.1C725.6 324.7 739.1 318.6 743.1 317.0" fill="none" stroke="#9a9098" stroke-width="0.700" opacity="0.800"/>
<path d="M659.0 362.1C662.5 361.4 673.2 358.2 680.0 358.0C686.8 357.8 694.5 361.2 700.0 361.0C705.5 360.8 708.8 356.5 713.0 357.0C717.2 357.5 719.7 362.0 725.0 364.0C730.3 366.0 741.7 368.2 745.0 369.0" fill="none" stroke="#9a9098" stroke-width="0.700" opacity="0.800"/>
<path d="M850.7 143.0C853.8 145.5 862.5 154.8 869.3 157.9C876.1 161.0 884.8 161.6 891.7 161.6C898.5 161.6 907.2 158.5 910.3 157.9" fill="none" stroke="#9a9098" stroke-width="0.700" opacity="0.800"/>
<path d="M828.4 202.6C831.5 201.0 840.8 194.2 847.0 193.3C853.2 192.4 862.5 196.4 865.6 197.0" fill="none" stroke="#9a9098" stroke-width="0.700" opacity="0.800"/>
<path d="M832.1 241.7C835.2 243.6 843.9 252.9 850.7 252.9C857.5 252.9 869.3 243.6 873.0 241.7" fill="none" stroke="#9a9098" stroke-width="0.700" opacity="0.800"/>
<path d="M589.4 293.9C591.1 294.8 595.5 297.5 599.5 299.6C603.6 301.6 608.6 305.4 613.7 306.0C618.7 306.7 623.8 304.7 629.9 303.6C635.9 302.5 643.4 300.7 650.1 299.6C656.8 298.4 663.6 298.2 670.3 296.7C677.1 295.3 683.8 293.0 690.5 290.7C697.3 288.3 705.4 285.6 710.8 282.6C716.2 279.5 718.2 274.5 722.9 272.5C727.6 270.4 734.4 269.8 739.1 270.4C743.8 271.1 746.5 276.5 751.2 276.5C755.9 276.5 762.7 273.1 767.4 270.4C772.1 267.7 774.8 263.0 779.5 260.3C784.2 257.6 791.6 256.0 795.7 254.3C799.7 252.6 802.4 250.9 803.8 250.2" fill="none" stroke="#e58a9c" stroke-width="1.100" opacity="0.900"/>
<path d="M622.1 307.8C623.4 309.7 627.3 315.2 629.9 319.4C632.5 323.6 635.1 329.4 637.7 333.0C640.3 336.6 642.8 338.2 645.4 340.8C648.0 343.4 650.9 344.9 653.2 348.5C655.5 352.1 656.4 360.6 659.0 362.1C661.6 363.6 665.1 358.3 668.7 357.3C672.3 356.3 676.5 356.5 680.4 356.3C684.3 356.1 688.1 355.8 692.0 356.3C695.9 356.8 700.1 359.4 703.7 359.2C707.3 359.0 709.9 354.8 713.4 355.3C716.9 355.8 720.8 360.0 725.0 362.1C729.2 364.2 733.7 367.2 738.6 368.0C743.5 368.8 750.6 367.3 754.2 367.0C757.8 366.7 759.0 366.2 760.0 366.0" fill="none" stroke="#e58a9c" stroke-width="1.100" opacity="0.900"/>
<path d="M585.4 290.7C582.7 289.7 575.6 285.9 569.2 284.6C562.8 283.3 551.7 281.6 547.0 282.6C542.2 283.6 543.2 288.0 540.9 290.7C538.5 293.4 535.5 296.4 532.8 298.8C530.1 301.1 529.4 302.1 524.7 304.8C520.0 307.5 510.2 313.9 504.5 314.9C498.8 315.9 493.6 310.6 490.3 310.9C487.1 311.2 486.8 313.6 485.1 317.0C483.4 320.3 480.4 326.1 480.2 331.1C480.1 336.2 481.6 342.9 484.3 347.3C487.0 351.7 494.4 355.7 496.4 357.4" fill="none" stroke="#e58a9c" stroke-width="1.100" opacity="0.900"/>
<path d="M524.7 304.8C525.0 308.5 528.1 320.0 526.7 327.1C525.4 334.1 520.3 342.2 516.6 347.3C512.9 352.3 506.5 355.7 504.5 357.4" fill="none" stroke="#e58a9c" stroke-width="1.100" opacity="0.900"/>
<path d="M803.8 250.2C802.8 252.9 800.4 260.3 797.7 266.4C795.0 272.5 791.3 279.9 787.6 286.6C783.9 293.4 778.7 300.8 775.5 306.8C772.2 312.9 769.7 317.6 768.2 323.0C766.7 328.4 767.7 333.1 766.6 339.2C765.4 345.3 762.9 354.4 761.3 359.4C759.8 364.5 757.6 365.5 757.3 369.5C756.9 373.6 756.9 380.0 759.3 383.7C761.7 387.4 768.1 387.7 771.4 391.8C774.8 395.8 777.5 403.2 779.5 408.0C781.5 412.7 783.6 416.0 783.6 420.1C783.6 424.1 781.5 428.9 779.5 432.2C777.5 435.6 774.8 437.3 771.4 440.3C768.1 443.3 763.3 446.7 759.3 450.4C755.2 454.1 749.2 460.5 747.2 462.6" fill="none" stroke="#e58a9c" stroke-width="1.100" opacity="0.900"/>
<path d="M880.5 130.0C878.0 133.1 867.5 141.8 865.6 148.6C863.7 155.4 870.6 163.5 869.3 171.0C868.1 178.4 861.9 185.8 858.2 193.3C854.4 200.7 850.7 208.2 847.0 215.6C843.3 223.1 840.2 231.5 835.8 238.0C831.5 244.5 825.0 249.8 820.9 254.7C816.9 259.7 813.2 265.6 811.6 267.8" fill="none" stroke="#e58a9c" stroke-width="1.100" opacity="0.900"/>
<path d="M811.6 267.8C811.9 270.9 811.3 281.4 813.5 286.4C815.6 291.3 819.1 295.7 824.6 297.5C830.2 299.4 840.8 299.4 847.0 297.5C853.2 295.7 859.4 288.2 861.9 286.4" fill="none" stroke="#e8a8a8" stroke-width="0.900" opacity="0.900"/>
<path d="M910.3 157.9C909.0 162.0 903.4 172.5 902.8 182.1C902.2 191.7 907.8 206.3 906.5 215.6C905.3 224.9 899.7 231.8 895.4 238.0C891.0 244.2 885.5 246.0 880.5 252.9C875.5 259.7 868.1 274.6 865.6 278.9" fill="none" stroke="#e8b8a0" stroke-width="0.900" opacity="0.900"/>
<path d="M850.7 138.2C853.2 139.6 858.2 145.0 865.6 146.8C873.0 148.5 884.2 148.9 895.4 148.6C906.5 148.3 920.8 146.1 932.6 144.9C944.4 143.7 960.5 141.8 966.1 141.2" fill="none" stroke="#f5d3a2" stroke-width="0.900"/>
<ellipse cx="762" cy="186.8" rx="2.6" ry="2.2" transform="rotate(-30 762 186.8)" fill="#eef0e2" stroke="#d8d0c0" stroke-width="0.400"/>
<ellipse cx="747.7" cy="209.1" rx="1.2" ry="1" transform="rotate(0 747.7 209.1)" fill="#eef0e2" stroke="#d8d0c0" stroke-width="0.400"/>
<ellipse cx="724" cy="220.7" rx="4.2" ry="2.8" transform="rotate(20 724 220.7)" fill="#eef0e2" stroke="#d8d0c0" stroke-width="0.400"/>
<ellipse cx="735.2" cy="230.5" rx="2.8" ry="5" transform="rotate(-10 735.2 230.5)" fill="#eef0e2" stroke="#d8d0c0" stroke-width="0.400"/>
<ellipse cx="739.7" cy="243" rx="2.8" ry="3.4" transform="rotate(-20 739.7 243)" fill="#eef0e2" stroke="#d8d0c0" stroke-width="0.400"/>
<ellipse cx="695.2" cy="221.2" rx="2" ry="1.5" transform="rotate(0 695.2 221.2)" fill="#eef0e2" stroke="#d8d0c0" stroke-width="0.400"/>
<ellipse cx="672.9" cy="226.6" rx="1.2" ry="1.5" transform="rotate(0 672.9 226.6)" fill="#eef0e2" stroke="#d8d0c0" stroke-width="0.400"/>
<ellipse cx="548" cy="210.9" rx="1.8" ry="1.5" transform="rotate(0 548 210.9)" fill="#eef0e2" stroke="#d8d0c0" stroke-width="0.400"/>
<ellipse cx="433" cy="314.7" rx="1.8" ry="3.2" transform="rotate(-25 433 314.7)" fill="#eef0e2" stroke="#d8d0c0" stroke-width="0.400"/>
<ellipse cx="461.6" cy="319.1" rx="4.6" ry="2" transform="rotate(20 461.6 319.1)" fill="#eef0e2" stroke="#d8d0c0" stroke-width="0.400"/>
<ellipse cx="462.8" cy="309.3" rx="1.5" ry="2" transform="rotate(0 462.8 309.3)" fill="#eef0e2" stroke="#d8d0c0" stroke-width="0.400"/>
<ellipse cx="431.2" cy="474.1" rx="3.4" ry="2.8" transform="rotate(40 431.2 474.1)" fill="#eef0e2" stroke="#d8d0c0" stroke-width="0.400"/>
<ellipse cx="680.5" cy="562" rx="6.5" ry="3.3" transform="rotate(8 680.5 562)" fill="#eef0e2" stroke="#d8d0c0" stroke-width="0.400"/>
<ellipse cx="302" cy="431" rx="1.3" ry="1.3" transform="rotate(0 302 431)" fill="#eef0e2" stroke="#d8d0c0" stroke-width="0.400"/>
<path d="M690.4 570.4L695 569.3L704.1 573.8L711 578.4L719 584.1L720.2 587L692.7 587L691.5 580.7L690.4 575Z" fill="#f2efe9" stroke="#e0c8b8" stroke-width="0.500"/>
<path d="M700 580L708 579.500L716 584L718 587L699 587Z" fill="#f2c4a0" opacity="0.850"/>
<text x="571.0" y="294.0" font-family="Liberation Sans,DejaVu Sans,sans-serif" font-size="7.6" font-style="normal" font-weight="normal" text-anchor="middle" fill="#222" stroke="#fff" stroke-width="1.200" stroke-opacity="0.700" paint-order="stroke">Palermo</text>
<text x="482.0" y="309.0" font-family="Liberation Sans,DejaVu Sans,sans-serif" font-size="5.8" font-style="normal" font-weight="normal" text-anchor="middle" fill="#444" stroke="#fff" stroke-width="1.200" stroke-opacity="0.700" paint-order="stroke">Trapani</text>
<text x="599.0" y="398.5" font-family="Liberation Sans,DejaVu Sans,sans-serif" font-size="5.8" font-style="normal" font-weight="normal" text-anchor="middle" fill="#444" stroke="#fff" stroke-width="1.200" stroke-opacity="0.700" paint-order="stroke">Agrigento</text>
<text x="658.0" y="373.0" font-family="Liberation Sans,DejaVu Sans,sans-serif" font-size="5.8" font-style="italic" font-weight="normal" text-anchor="middle" fill="#8a5aa8" stroke="#fff" stroke-width="1.200" stroke-opacity="0.700" paint-order="stroke">Sicilia</text>
<text x="760.0" y="364.5" font-family="Liberation Sans,DejaVu Sans,sans-serif" font-size="6.2" font-style="normal" font-weight="normal" text-anchor="middle" fill="#333" stroke="#fff" stroke-width="1.200" stroke-opacity="0.700" paint-order="stroke">Catania</text>
<text x="786.0" y="421.5" font-family="Liberation Sans,DejaVu Sans,sans-serif" font-size="5.8" font-style="normal" font-weight="normal" text-anchor="middle" fill="#444" stroke="#fff" stroke-width="1.200" stroke-opacity="0.700" paint-order="stroke">Siracusa</text>
<text x="725.5" y="444.5" font-family="Liberation Sans,DejaVu Sans,sans-serif" font-size="5.8" font-style="normal" font-weight="normal" text-anchor="middle" fill="#444" stroke="#fff" stroke-width="1.200" stroke-opacity="0.700" paint-order="stroke">Ragusa</text>
<text x="801.5" y="268.0" font-family="Liberation Sans,DejaVu Sans,sans-serif" font-size="5.8" font-style="normal" font-weight="normal" text-anchor="middle" fill="#444" stroke="#fff" stroke-width="1.200" stroke-opacity="0.700" paint-order="stroke">Messina</text>
<text x="813.0" y="275.5" font-family="Liberation Sans,DejaVu Sans,sans-serif" font-size="5.8" font-style="normal" font-weight="normal" text-anchor="middle" fill="#444" stroke="#fff" stroke-width="1.200" stroke-opacity="0.700" paint-order="stroke">Reggio di</text>
<text x="813.0" y="283.0" font-family="Liberation Sans,DejaVu Sans,sans-serif" font-size="5.8" font-style="normal" font-weight="normal" text-anchor="middle" fill="#444" stroke="#fff" stroke-width="1.200" stroke-opacity="0.700" paint-order="stroke">Calabria</text>
<text x="857.0" y="198.5" font-family="Liberation Sans,DejaVu Sans,sans-serif" font-size="5.8" font-style="normal" font-weight="normal" text-anchor="middle" fill="#444" stroke="#fff" stroke-width="1.200" stroke-opacity="0.700" paint-order="stroke">Vibo Valentia</text>
<text x="905.0" y="163.5" font-family="Liberation Sans,DejaVu Sans,sans-serif" font-size="5.8" font-style="normal" font-weight="normal" text-anchor="middle" fill="#444" stroke="#fff" stroke-width="1.200" stroke-opacity="0.700" paint-order="stroke">Catanzaro</text>
<text x="908.0" y="146.0" font-family="Liberation Sans,DejaVu Sans,sans-serif" font-size="6.5" font-style="italic" font-weight="normal" text-anchor="middle" fill="#8a5aa8" stroke="#fff" stroke-width="1.200" stroke-opacity="0.700" paint-order="stroke">Calabria</text>
<text x="711.0" y="304.5" font-family="Liberation Sans,DejaVu Sans,sans-serif" font-size="5.6" font-style="italic" font-weight="normal" text-anchor="middle" fill="#3f8f4a">Parco dei</text>
<text x="711.0" y="311.5" font-family="Liberation Sans,DejaVu Sans,sans-serif" font-size="5.6" font-style="italic" font-weight="normal" text-anchor="middle" fill="#3f8f4a">Nebrodi</text>
<text x="541.5" y="501.0" font-family="Liberation Sans,DejaVu Sans,sans-serif" font-size="11" font-style="italic" font-weight="normal" text-anchor="middle" fill="#6b8fc4">Canale di Sicilia</text>
<text x="541.5" y="517.5" font-family="DejaVu Sans,sans-serif" font-size="10.5" font-style="normal" font-weight="normal" text-anchor="middle" fill="#6b8fc4">مضيق صقلية</text>
<text x="680.1" y="565.6" font-family="Liberation Sans,DejaVu Sans,sans-serif" font-size="5.8" font-style="normal" font-weight="normal" text-anchor="middle" fill="#444" stroke="#fff" stroke-width="1.200" stroke-opacity="0.700" paint-order="stroke">Ir-Rabat</text>
<text x="696.4" y="578.6" font-family="Liberation Sans,DejaVu Sans,sans-serif" font-size="8.6" font-style="normal" font-weight="normal" text-anchor="middle" fill="#8a4a9a" stroke="#fff" stroke-width="1.200" stroke-opacity="0.700" paint-order="stroke">Malta</text>
</svg>
<div id="status" class="abs">
<div class="sbx" style="left:1px;top:4px;width:303px;height:24px"></div>
<svg class="abs" style="left:8px;top:9px" width="14" height="14" viewBox="0 0 14 14"><circle cx="5.500" cy="5.500" r="4" fill="none" stroke="#777" stroke-width="1.400"/><path d="M8.500 8.500L12.500 12.500" stroke="#777" stroke-width="1.600"/></svg>
<span class="abs" style="left:29px;top:8px;font-size:13.500px;font-style:italic;color:#a0a0a0;white-space:nowrap;letter-spacing:-0.22px">Digita per localizzare (Ctrl+K)</span>
<span class="abs" style="left:611px;top:10px;font-size:13.500px;color:#111;white-space:nowrap;letter-spacing:-0.60px">Coordinate</span>
<div class="sbx" style="left:675px;top:4px;width:117px;height:23px"></div>
<span class="abs" style="left:681px;top:10px;font-size:13.500px;color:#111;white-space:nowrap;letter-spacing:-0.19px">1198004,3988114</span>
<svg class="abs" style="left:796px;top:5px" width="22" height="22" viewBox="0 0 22 22"><ellipse cx="9.5" cy="10.500" rx="5.500" ry="8" transform="rotate(-30 9.500 10.500)" fill="#fff" stroke="#111" stroke-width="2.200"/><path d="M3.500 6.500L12 15.500M6.500 3.500L14 12" stroke="#111" stroke-width="1.600"/><path d="M7 5L9.500 9" stroke="#111" stroke-width="2.600"/><circle cx="12.500" cy="16" r="3.200" fill="#f8e0e0" stroke="#111" stroke-width="1.600"/><circle cx="12.500" cy="16" r="0.900" fill="#111"/><path d="M15 5L17.500 3.500M16.500 7.500L19 7M14 3L15 1" stroke="#333" stroke-width="1"/></svg>
<span class="abs" style="left:829px;top:10px;font-size:13.500px;color:#111;white-space:nowrap;letter-spacing:-0.76px">Scala</span>
<div class="sbx" style="left:863px;top:4px;width:93px;height:24px"></div>
<div class="abs" style="left:930px;top:5px;width:25px;height:22px;background:#f2f2f2"></div>
<span class="abs" style="left:867px;top:10px;font-size:13.500px;color:#111;white-space:nowrap;letter-spacing:-0.31px">1:3910506</span>
<svg class="abs" style="left:935px;top:14.5px" width="10" height="5" viewBox="0 0 10 5"><path d="M0 0H10L5.0 5Z" fill="#666"/></svg>
<svg class="abs" style="left:968px;top:6px" width="18" height="20" viewBox="0 0 18 20"><path d="M4.500 9V6A4.500 4.500 0 0 1 13.500 6V9" fill="none" stroke="#8a8a8a" stroke-width="2.200"/><rect x="1.500" y="8.500" width="15" height="10.500" rx="1.500" fill="#7c7c7c"/><path d="M2 11.500H16M2 14H16M2 16.500H16" stroke="#999" stroke-width="0.700"/></svg>
<span class="abs" style="left:993px;top:10px;font-size:13.500px;color:#111;white-space:nowrap;letter-spacing:-0.36px">Lente d'ingrandimento</span>
</div>
</body></html>
